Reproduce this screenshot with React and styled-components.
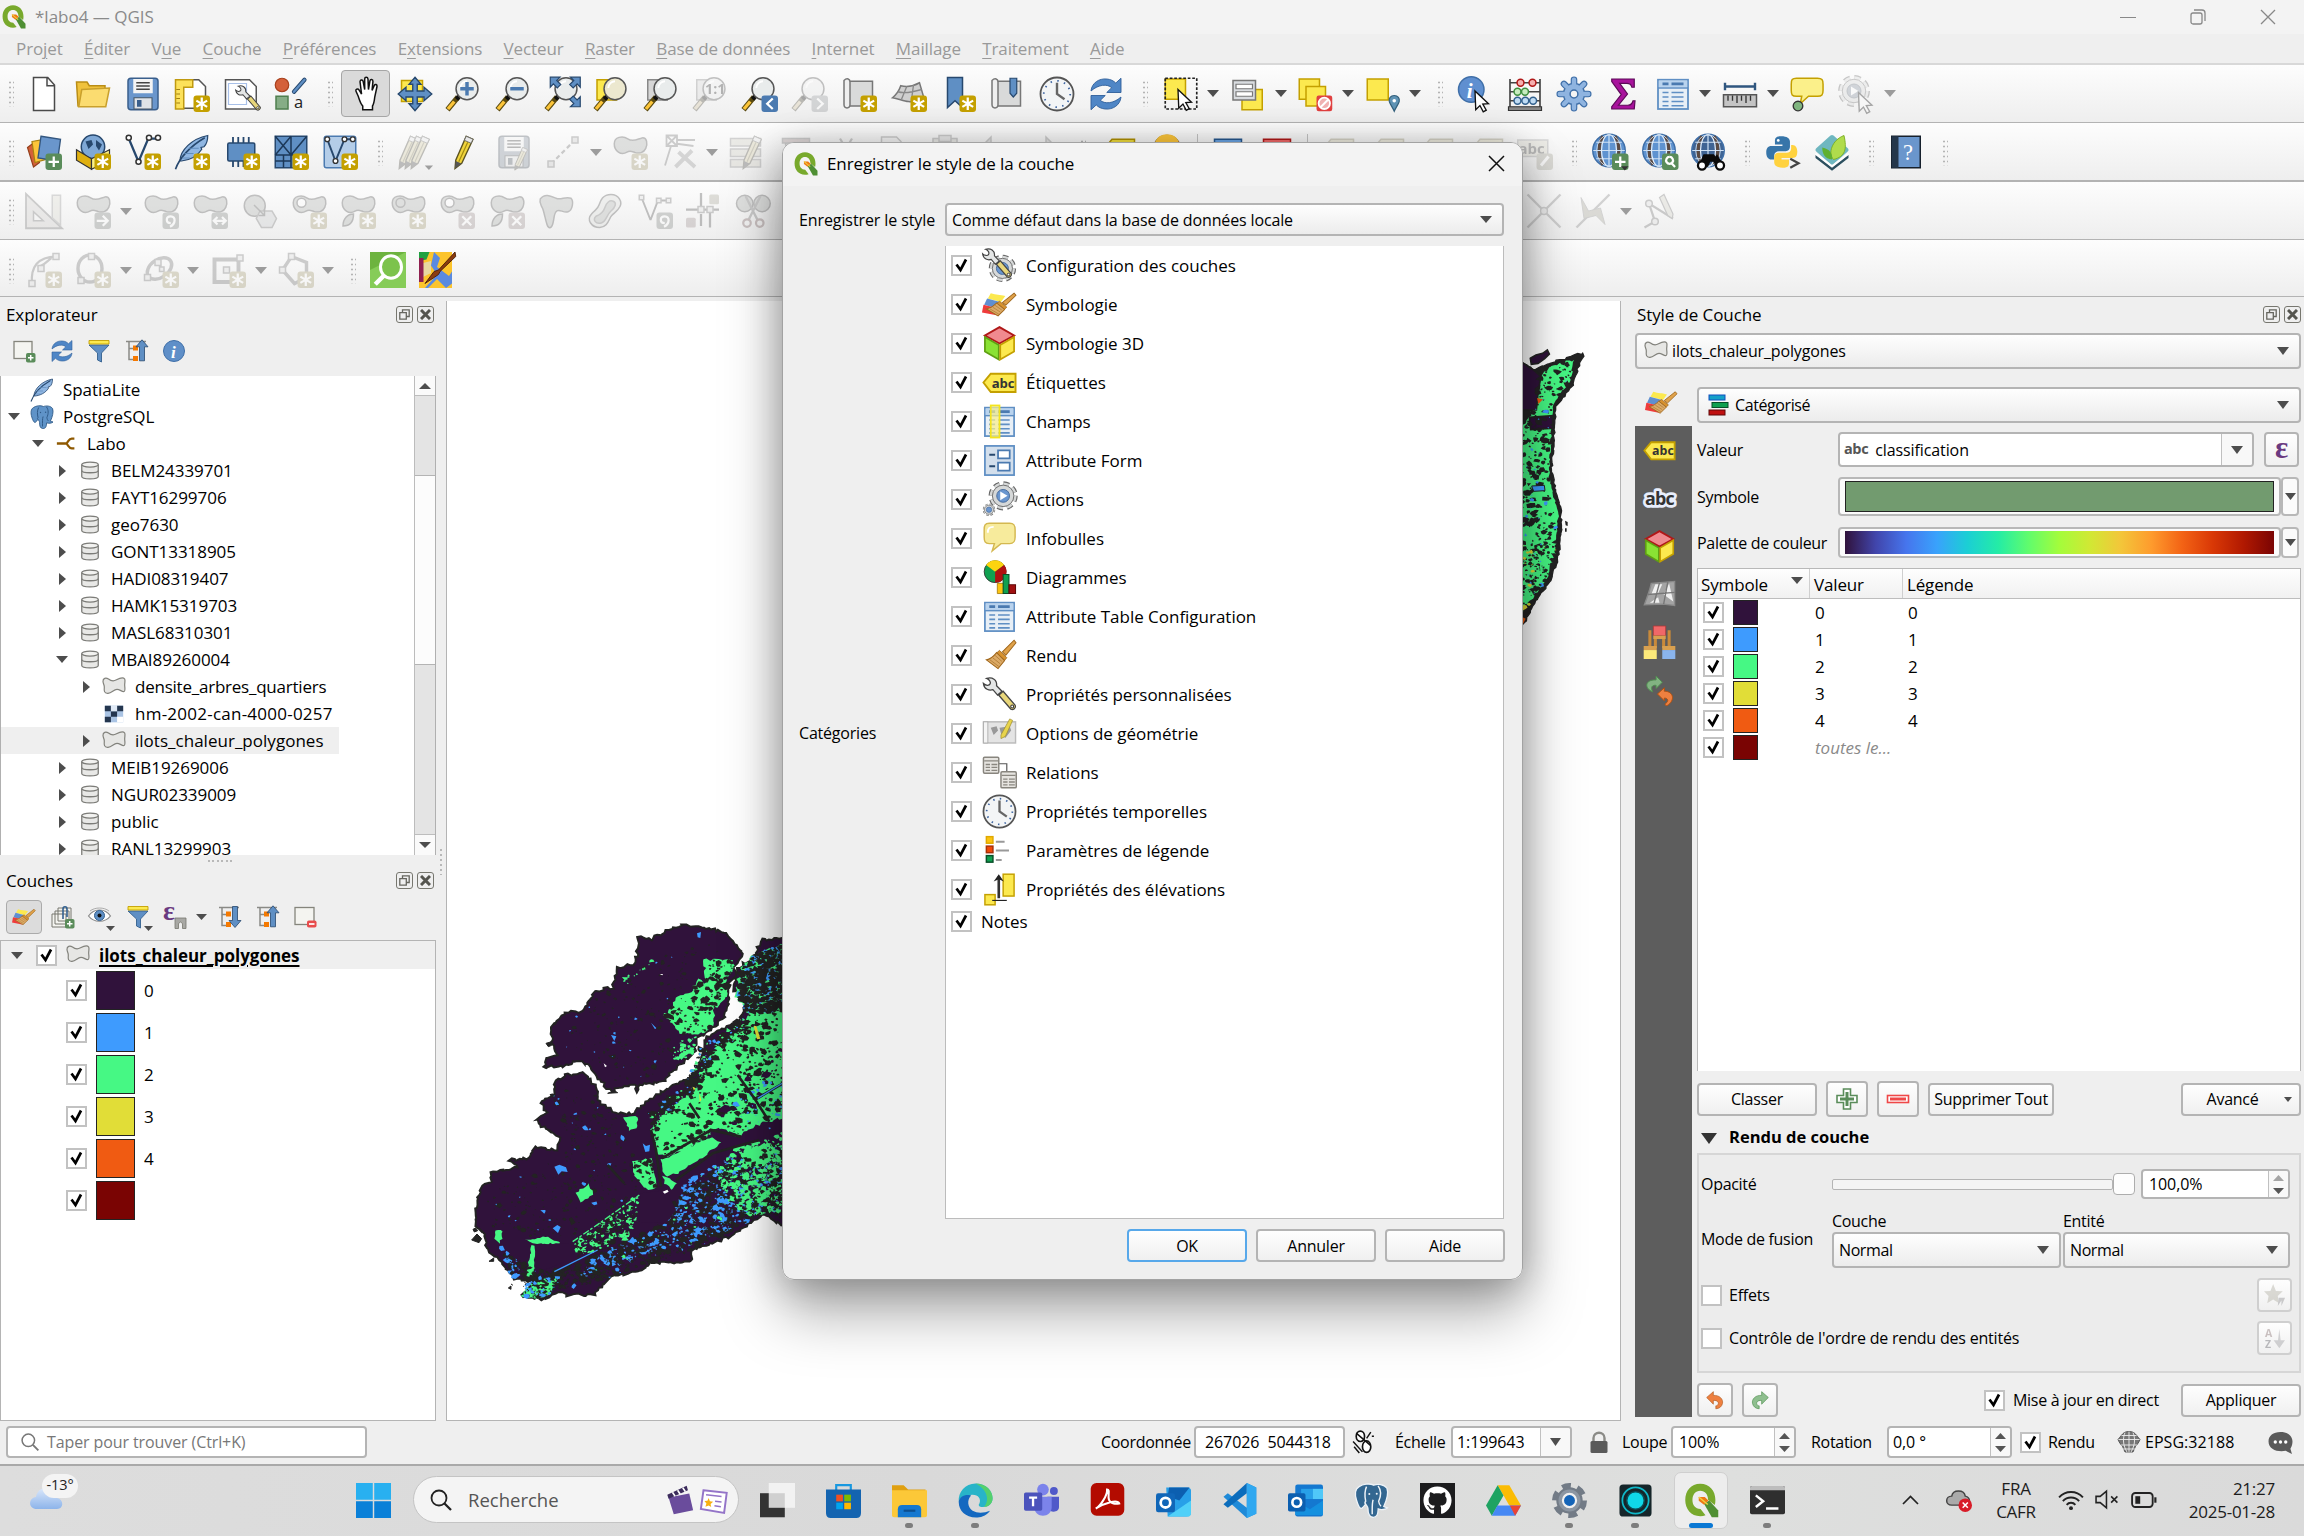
import React from "react";
import styled, { createGlobalStyle, css } from "styled-components";
import { FaGithub } from "react-icons/fa";

const Global = createGlobalStyle`
  * { box-sizing: border-box; }
  html, body { margin: 0; padding: 0; background: #efefef; }
  body { font-family: "Open Sans", "Noto Sans", sans-serif; font-size: 17px; letter-spacing: -0.1px; color: #000; overflow: hidden; }
`;

/* ---------- icons, drawn on a 24 unit grid ---------- */

const Svg = ({ s = 36, vb = "0 0 24 24", dim, children }) => (
  <IconSvg width={s} height={s} viewBox={vb} $dim={dim} fill="none">{children}</IconSvg>
);
const IconSvg = styled.svg`
  display: block;
  flex: none;
  overflow: visible;
  letter-spacing: 0;
  ${(p) => p.$dim && css`opacity: 0.34; filter: grayscale(0.75);`}
`;

const BADGES = {
  star: ["#c4a000", "M18.5 14.3v8.400M14.900 16.400l7.200 4.200M22.100 16.400l-7.200 4.200"],
  plus: ["#5a8c5a", "M18.500 15v7M15 18.500h7"],
  x: ["#c08a8a", "M15.500 15.500l6 6M21.500 15.500l-6 6"],
  right: ["#7a8a80", "M14.500 18.500h7M18.500 15.200l3.300 3.300-3.300 3.300"],
  both: ["#7a8a80", "M14.500 18.500h8M17 16l-2.500 2.500 2.500 2.500M20 16l2.500 2.500-2.500 2.500"],
  turn: ["#7a8a80", "M18 22.500c4-2 4-7 .5-7-3.500 0-3.500 4.500 0 4.500"],
  left: ["#4b7ab0", "M20.500 15l-3.700 3.500 3.700 3.500"],
  next: ["#8c9aa8", "M16.800 15l3.700 3.500-3.700 3.500"],
  zoom: ["#5a8c5a", "M18 15.300a2.300 2.300 0 1 0 .1 0M19.700 19.800l2 2.200"],
};
const Badge = ({ k }) => (
  <>
    <rect x="13" y="13" width="11" height="11" rx="2" fill={BADGES[k][0]} />
    <path d={BADGES[k][1]} stroke="#fff" strokeWidth="1.500" />
  </>
);
const BLOB = "M1.500 6.500C1.500 2 7 .8 10.500 3.200S17 3.300 20 2.600c3.500-.4 3.800 4 2.500 7s-4.500 3.600-7 2.800-3.500-1.500-5.500-.3C6 14.500 1.500 11.500 1.500 6.500z";
const Blob = () => <path d={BLOB} fill="#a9b5a9" stroke="#555" />;
const Lens = ({ fill = "#e9ecec" }) => (
  <>
    <path d="M1 22.500L8 14" stroke="#5a4a10" strokeWidth="3.600" />
    <path d="M1.300 22L5.500 17" stroke="#fcc53a" strokeWidth="2.200" />
    <path d="M7 15.500l2-2.200" stroke="#111" strokeWidth="3" />
    <circle cx="14" cy="8.500" r="7.300" fill={fill} stroke="#555" strokeWidth="1" />
    <path d="M9.500 8a4.500 5 0 0 1 4.500-4.500" stroke="#fff" strokeWidth="1.200" />
  </>
);
const Sheet = () => <path d="M4 2.500h12.500L21 7v14.500H4z" fill="#fff" stroke="#555" />;
const Broom = () => (
  <>
    <path d="M14 9.500L22 1.500l1.300 1.800-7 8.500z" fill="#e0a24a" stroke="#a0671c" strokeWidth=".7" />
    <path d="M12 8.500l5 5-1.500 1.800-5.500-5z" fill="#d8922e" stroke="#a0671c" strokeWidth=".6" />
    <path d="M10 10l5.500 5.500L11 21 3 15c3-.5 5-2.500 7-5z" fill="#dcaa66" stroke="#a0671c" strokeWidth=".7" />
    <path d="M5.500 15l6 4.500M7.500 13.700l5 4M9 12l4.600 4" stroke="#a8742e" strokeWidth=".5" />
  </>
);
const Wrench = () => (
  <>
    <path d="M1 4.500c1.500 1.500 4 1.600 4.600.2C6.200 3.400 5 1.700 3.200 1 7-.2 10.500 2 10 6l3.700 3.800-3 2.600L7.500 8.700C5 9.500 1.500 8.500 1 4.500z" fill="#e4e6e6" stroke="#444" strokeWidth=".9" />
    <path d="M11.500 12.500l3-2.700 8.300 9.700c.8 1.500-1.400 3.500-3 2.600z" fill="#e8d67a" stroke="#444" strokeWidth=".9" />
    <circle cx="20.700" cy="20.200" r="1" fill="#fff" stroke="#333" strokeWidth=".7" />
  </>
);
const Gear = ({ cx, cy, r, fill = "#d6d8d8", stroke = "#666", w = 0.9, inner = "#6a96cf" }) => (
  <>
    <circle cx={cx} cy={cy} r={r} fill="none" stroke={stroke} strokeWidth={r * 0.5} strokeDasharray={`${r * 0.46} ${r * 0.325}`} />
    <circle cx={cx} cy={cy} r={r} fill="none" stroke={fill} strokeWidth={r * 0.3} strokeDasharray={`${r * 0.46} ${r * 0.325}`} />
    <circle cx={cx} cy={cy} r={r * 0.92} fill={fill} stroke={stroke} strokeWidth={w * 0.7} />
    <circle cx={cx} cy={cy} r={r * 0.55} fill={inner} stroke="#466a9a" strokeWidth={w * 0.7} />
  </>
);
const TableArt = () => (
  <>
    <rect x="2" y="2.500" width="20" height="19.500" fill="#e8eff6" stroke="#5f8fc4" strokeWidth="1.200" />
    <rect x="2.500" y="3" width="19" height="4.500" fill="#b9d3ee" />
    <path d="M5 5.200h4M11 5.200h8" stroke="#4b7ab0" strokeWidth="1.800" />
    <path d="M2 8h20" stroke="#5f8fc4" />
    <path d="M5 11h4M11 11h8M5 14h4M11 14h8M5 17h4M11 17h8M5 19.800h4M11 19.800h8" stroke="#5f8fc4" strokeWidth="1.100" />
  </>
);
const Cylinder = () => (
  <>
    <path d="M3 5v13c0 3.500 18 3.500 18 0V5" fill="#e8e8e6" stroke="#7c7c78" strokeWidth="1.400" />
    <ellipse cx="12" cy="5" rx="9" ry="2.700" fill="#f2f2f0" stroke="#7c7c78" strokeWidth="1.400" />
    <path d="M3 11.500c0 3.200 18 3.200 18 0" stroke="#7c7c78" strokeWidth="1.400" />
  </>
);
const Refresh = () => (
  <>
    <path d="M2 10C2.500 4.500 7.500 1.500 12.500 2c2.500.2 4.600 1.200 6 2.700L22 1.500V11h-9.500l3.300-3.200C13 5.200 7 5.500 2 10z" fill="#4f86c6" stroke="#2f5f9a" strokeWidth=".6" />
    <path d="M22 14c-.5 5.500-5.500 8.500-10.500 8-2.500-.2-4.600-1.200-6-2.700L2 22.500V13h9.500l-3.300 3.200c2.800 2.600 8.800 2.300 13.800-2.200z" fill="#4f86c6" stroke="#2f5f9a" strokeWidth=".6" />
  </>
);
const Feather = () => (
  <>
    <path d="M4 18C4 11 12 3 22.500 1c0 4-1 6-2.500 7.500l-2 .5.500 1.200C15.500 15 10 17.500 5 18z" fill="#8fb6e2" stroke="#27486e" strokeWidth=".8" />
    <path d="M1 23.500C3.500 16 11 8 20.500 2.500" stroke="#27486e" strokeWidth="1.100" />
    <path d="M7 13h6M10 9.500h6.500M5.500 16h5" stroke="#5b88b8" strokeWidth=".6" />
  </>
);
const Globe = ({ c1 = "#5f93d0" }) => (
  <>
    <circle cx="12" cy="11" r="10.800" fill={c1} stroke="#3f6fa8" />
    <path d="M8 1.500C4.500 7 4.500 15 8 20.500M16 1.500c3.500 5.500 3.500 13.500 0 19" stroke="#5b4a42" strokeWidth="2.200" />
    <path d="M1.500 11h21M3.500 5.500h17M3.500 16.500h17M12 .5v21" stroke="#cfe1f4" strokeWidth=".8" />
    <ellipse cx="12" cy="11" rx="5" ry="10.500" stroke="#e5effa" strokeWidth=".8" />
    <ellipse cx="12" cy="11" rx="8.200" ry="10.500" stroke="#cfe1f4" strokeWidth=".6" />
  </>
);
const Pencil = ({ x = 0 }) => (
  <g transform={`translate(${x} 0)`}>
    <path d="M14 1.500l4.500 2L11 19.500l-4.500 3.500.5-5.500z" fill="#f0d43c" stroke="#5b5220" strokeWidth=".9" />
    <path d="M14 1.500l4.500 2-1.300 2.700-4.500-2z" fill="#e8e8e8" stroke="#666" strokeWidth=".6" />
    <path d="M7 18l3.800 1.700L6.500 23z" fill="#555" />
    <path d="M15 5.500L9 18.500" stroke="#a38b10" strokeWidth=".8" />
  </g>
);
const Cursor = ({ x = 11, y = 10 }) => (
  <path transform={`translate(${x} ${y})`} d="M0 0l9 8.500-3.800.3 2.300 4-2 1.100-2.200-4.200L.5 12.500z" fill="#fff" stroke="#111" strokeWidth=".9" />
);
const Square = ({ x, y, s = 13 }) => <rect x={x} y={y} width={s} height={s} fill="#fce94f" stroke="#c4a000" strokeWidth="1" />;
const Cube = () => (
  <>
    <path d="M12 .8L22 6.500 12 12 2 6.500z" fill="#f08a8f" stroke="#b01818" strokeWidth="1.300" />
    <path d="M2 7.500l9.500 5.500v10L2 17.500z" fill="#8ae234" stroke="#5fa012" strokeWidth="1.200" />
    <path d="M22 7.500L12.500 13v10l9.500-5.500z" fill="#fce94f" stroke="#c4a000" strokeWidth="1.200" />
  </>
);
const Clock = () => (
  <>
    <circle cx="12" cy="12" r="11" fill="#f3f5f6" stroke="#555" strokeWidth="1.200" />
    <circle cx="12" cy="12" r="8.800" stroke="#3a62a0" strokeWidth="1.200" strokeDasharray="1 3.600" />
    <path d="M12 4.500V12l5 3.500" stroke="#666" strokeWidth="1.600" />
  </>
);
const Scroll = () => (
  <>
    <path d="M5 3.500h16v16.500H5z" fill="#d9dada" stroke="#777" />
    <path d="M2 3c2-2 4-1 4 1v15c0 3-4 3-4 0z" fill="#efefef" stroke="#777" />
  </>
);
const SymbologyArt = () => (
  <g transform="translate(0 3) scale(1 .8)">
    <path d="M6 1.500c4 1.500 6 1 10 2.500L13 9 4 6z" fill="#fce94f" />
    <path d="M3.500 6l9 3-4 5-7-2.500z" fill="#5f8fd0" />
    <path d="M1 11.500l7 2 2 7-10-2.500z" fill="#ef3b3b" />
    <Broom />
  </g>
);
const TreeLines = () => (
  <>
    <path d="M1 2.500h20M4 2.500v18h6M4 9.500h6" stroke="#8a8a86" strokeWidth="1.500" />
    <rect x="8" y="6.500" width="5" height="5" fill="#f57900" />
    <rect x="8" y="17" width="5" height="5" fill="#f57900" />
  </>
);
const Elephant = ({ fill, line }) => (
  <>
    <path d="M3.500 2.500C.8 4 .5 8 1.800 12c.9 3 2.200 6.200 3.700 5.200 1-.8 1.900-2 2.500-2.700.5 1 1.600 1.500 1.600 3.200 0 3 .5 5.600 3.200 5.800 3 .2 3.600-2 3.800-5.700 1.900.8 5 .5 6.400-.8-.8-.4-1.900-.3-2.600-.9C22.300 12 23.800 7 22.600 3.600 20.500.5 16 .7 13.500 1.500 10.500 0 6 .8 3.500 2.500z" fill={fill} stroke={line} strokeWidth=".9" />
    <path d="M8.600 2.500C7 6 7.300 9 8 12.500c-.8 1-.6 1.500 0 2M16.500 2c2.300 3 2 7 .4 10.500.2 1.500.5 2.500 1.600 3.500M12.500 21.500c0-4.500-.2-7.500.6-10" stroke={line} strokeWidth="1" />
    <circle cx="10.500" cy="7.500" r=".7" fill={line} />
    <circle cx="15.600" cy="7.300" r=".7" fill={line} />
  </>
);

const ICONS = {
  qgis: () => (
    <>
      <path d="M11.500 1.200C5.300 1.200 1.500 6 1.500 12s3.800 10.800 10 10.800c1.300 0 2.500-.2 3.500-.6l-3.300-4.200C8 17.800 6.300 15.300 6.300 12c0-3.600 2-6.200 5.200-6.200s5.200 2.500 5.200 6l4.500 3.600c.3-1 .4-2.200.4-3.400 0-6-3.900-10.800-10.100-10.800z" fill="#78a92c" />
      <path d="M14 14.500l3.500-2.200L23.500 19v4.500h-4.300z" fill="#4f8f33" />
      <path d="M10.500 10h4l2.500 2.300-3 2.800-3.500-2.600z" fill="#ee7913" />
      <path d="M10.500 10l6 5" stroke="#f0d040" strokeWidth="1" />
    </>
  ),
  pg: () => <Elephant fill="#5f93c8" line="#2f5a88" />,
  newp: () => <path d="M5 1h9.500L19 6v17H5zM14 1v5.500h5" fill="#fff" stroke="#4a4a4a" strokeWidth="1" />,
  open: () => (
    <>
      <path d="M1 4h7l1.500 2.500H20V20H2z" fill="#f0c23c" stroke="#b98d16" />
      <path d="M4.500 9L23 8l-2.500 12.500H2.500z" fill="#fbdc70" stroke="#c9a02c" />
    </>
  ),
  save: () => (
    <>
      <rect x="2" y="1.500" width="20" height="21" rx="2" fill="#6a96cc" stroke="#3a5f8c" />
      <path d="M5.500 2h13v9.500h-13z" fill="#f4f4f4" />
      <path d="M7.500 4.500h9M7.500 6.700h9M7.500 8.900h9" stroke="#444" strokeWidth="1" />
      <path d="M6 14.500h12v7.500H6z" fill="#dfe3e8" stroke="#456" strokeWidth=".7" />
      <rect x="8" y="16" width="3" height="4.500" fill="#3a5f8c" />
    </>
  ),
  layout: () => (<><Sheet /><path d="M1 2.500h11.500v5H6.500v14.500H1z" fill="#fce15a" stroke="#c09a10" /><path d="M1.500 9h2.500M1.500 12h2.500M1.500 15h2.500M1.500 18h2.500" stroke="#a08010" strokeWidth=".8" /><Badge k="star" /></>),
  layoutMgr: () => (<><path d="M1 2.500h16L21.500 7v15H1z" fill="#fff" stroke="#555" /><path d="M3 5h12v14H3z" stroke="#a8c0e8" strokeWidth=".8" /><g transform="translate(7 6) scale(.75)"><Wrench /></g></>),
  styleMgr: () => (
    <>
      <circle cx="6" cy="6" r="4.500" fill="#d4603a" stroke="#a8401c" strokeWidth=".8" />
      <path d="M14 10.500L21 2.500" stroke="#27486e" strokeWidth="2.800" strokeLinecap="round" />
      <path d="M14 10.500L21 2.500" stroke="#5f8fc4" strokeWidth="1.600" strokeLinecap="round" />
      <rect x="2" y="13.500" width="8" height="8.500" fill="#86ad86" stroke="#4f7f4f" />
      <text x="14" y="21.500" fontSize="11" fill="#222" fontFamily="Open Sans">a</text>
    </>
  ),
  hand: () => (
    <path d="M7.500 13.500L6 10.200c-.6-1.300 1.200-2.200 2-.9l1.700 2.700-1-8c-.2-1.600 1.800-1.800 2.100-.3l1 5.300V2c0-1.500 2-1.500 2.200 0l.3 7 1-5.700c.3-1.400 2-1.200 2 .3l-.6 6 1.500-3.300c.6-1.200 2-.6 1.800.7L18.500 14c-.3 3-.6 4.500-1.500 6v2.500h-6.500V20c-1.500-1.500-2-3.500-3-6.500z" fill="#fff" stroke="#111" strokeWidth="1" />
  ),
  pan: () => (
    <>
      <Square x={3} y={3} s={14} />
      <path d="M12 .8l4 4.700h-2.500v4.500H18V7.500l5.200 4.500-5.200 4.500V14h-4.500v4.500H16L12 23.200 8 18.500h2.500V14H6v2.500L.8 12 6 7.500V10h4.500V5.500H8z" fill="#5f8fc4" stroke="#27486e" strokeWidth=".9" />
    </>
  ),
  zin: () => (<><Lens /><path d="M14 4v9M9.500 8.500h9" stroke="#4b7ab0" strokeWidth="2.300" /></>),
  zout: () => (<><Lens /><path d="M9.500 8.500h9" stroke="#4b7ab0" strokeWidth="2.300" /></>),
  zfull: () => (
    <>
      <Lens />
      <path d="M3.500.8h6.500L7.800 3l2.700 2.700-2.300 2.200-2.600-2.600-2.100 2.200zM23.500.8H17L19.200 3l-2.700 2.700 2.300 2.200 2.600-2.600 2.100 2.200zM23.500 20.500H17l2.200-2.200-2.700-2.700 2.300-2.200 2.600 2.600 2.100-2.200z" fill="#5f8fc4" stroke="#27486e" strokeWidth=".8" />
    </>
  ),
  zsel: () => (<><rect x="2" y="2.500" width="13" height="13.500" fill="#fce94f" stroke="#c4a000" /><Lens fill="#ece8cf" /></>),
  zlay: () => (<><rect x="2.500" y="2.500" width="13" height="13.500" fill="#d6d6d6" stroke="#888" /><Lens /></>),
  z11: () => (<><rect x="2.500" y="2.500" width="13" height="13.500" fill="#d6d6d6" stroke="#888" /><Lens /><text x="8" y="12" fontSize="9.500" fontWeight="700" fill="#333" fontFamily="Open Sans">1:1</text></>),
  zlast: () => (<><Lens /><Badge k="left" /></>),
  znext: () => (<><Lens /><Badge k="next" /></>),
  mapview: () => (<><Scroll /><Badge k="star" /></>),
  mesh3d: () => (<><path d="M6.500 6.500c4 1 9 0 12.500-2l3.500 12c-3 2.500-8 .5-11 .5S5 15 1 14.500C4 12 5.500 9.500 6.500 6.500z" fill="#cfcfcf" stroke="#777" /><path d="M4.500 10.500c5 1.500 11 0 16-1.500M10.500 7L7 15.500M15 6l-1.500 11" stroke="#888" strokeWidth=".9" /><Badge k="star" /></>),
  bookmark: () => (<><path d="M5 1h10v20l-5-4.500L5 21z" fill="#5f8fc4" stroke="#27486e" /><Badge k="star" /></>),
  bookmarks: () => (<><Scroll /><path d="M14 1.500h4.500v10L16.200 14 14 11.500z" fill="#5f8fc4" stroke="#27486e" strokeWidth=".8" /></>),
  clock: Clock,
  refresh: Refresh,
  select: () => (<><Square x={1.500} y={2} s={13.500} /><path d="M1.500 1.500h21v20.500h-21z" stroke="#222" strokeWidth="1.100" strokeDasharray="1.800 1.200" /><Cursor x={10} y={9} /></>),
  selval: () => (<><Square x={8} y={9} s={13.500} /><rect x="2" y="3" width="15" height="13" fill="#d9dce0" stroke="#777" /><path d="M4 5.500h11v3H4zM4 10.500h11v3H4z" fill="#fff" stroke="#777" strokeWidth=".8" /></>),
  desel: () => (<><Square x={1.500} y={2} s={13.500} /><Square x={6} y={7} s={13} /><rect x="13" y="13" width="10.500" height="10.500" rx="1.500" fill="#e04040" /><circle cx="18.200" cy="18.200" r="3.800" fill="#f0b0b0" stroke="#fff" strokeWidth="1.200" /><path d="M15.500 21l5.500-5.500" stroke="#fff" strokeWidth="1.300" /></>),
  selloc: () => (<><Square x={1.500} y={2} s={14} /><path d="M19.500 13c-2.500 0-3.800 2-3.300 4 .6 2 2.300 4 3.300 6.500 1-2.500 2.700-4.500 3.300-6.500.5-2-.8-4-3.300-4z" fill="#5f93b4" stroke="#33607c" strokeWidth=".8" /><circle cx="19.500" cy="16.500" r="1.200" fill="#fff" /></>),
  ident: () => (<><circle cx="9.500" cy="9" r="8.500" fill="#5f8fd0" stroke="#3f6fa8" /><text x="6.500" y="14.500" fontSize="14" fontStyle="italic" fontWeight="700" fill="#fff" fontFamily="Liberation Serif">i</text><Cursor x={12} y={10} /></>),
  abacus: () => (
    <>
      <path d="M2 2v20M22 2v20M2 4.500h20M2 10.500h20M2 16.500h20" stroke="#444" strokeWidth="1.100" />
      <path d="M1 20.500h22v2.500H1z" fill="#888" stroke="#333" strokeWidth=".8" />
      <g strokeWidth="1">
        <g fill="#f6b0b0" stroke="#b01818"><circle cx="9" cy="4.500" r="2.300" /><circle cx="17" cy="4.500" r="2.300" /></g>
        <g fill="#c8ecc0" stroke="#3f8f3f"><circle cx="7" cy="10.500" r="2.300" /><circle cx="12" cy="10.500" r="2.300" /></g>
        <g fill="#c0dcf4" stroke="#33628f"><circle cx="7" cy="16.500" r="2.300" /><circle cx="12.200" cy="16.500" r="2.300" /><circle cx="17.400" cy="16.500" r="2.300" /></g>
      </g>
    </>
  ),
  gear: () => (
    <>
      <circle cx="12" cy="12" r="7" fill="#8fb4e0" stroke="#3f6fa8" />
      <g stroke="#3f6fa8" strokeWidth="4.400" strokeLinecap="round"><path d="M12 2.500v19M2.500 12h19M5.300 5.300l13.400 13.400M18.700 5.300L5.300 18.700" /></g>
      <g stroke="#8fb4e0" strokeWidth="2.900" strokeLinecap="round"><path d="M12 2.500v19M2.500 12h19M5.300 5.300l13.400 13.400M18.700 5.300L5.300 18.700" /></g>
      <circle cx="12" cy="12" r="6.600" fill="#8fb4e0" />
      <circle cx="12" cy="12" r="2.600" fill="#f4f4f4" stroke="#3f6fa8" />
    </>
  ),
  sigma: () => <path d="M4.500 2h15v5.500h-1.600c-.4-2-1.200-2.600-3.300-2.600H9.800L15 12l-6 7.500h6.200c2.300 0 3-1 3.500-3H20l-.5 5.500h-15v-1.600l6.300-8L4.500 3.700z" fill="#a8129c" stroke="#5c0a58" strokeWidth=".8" />,
  table: TableArt,
  ruler: () => (<><path d="M2 7h20M2 4.500v5M22 4.500v5" stroke="#2f567f" strokeWidth="1.600" /><rect x="1" y="12.500" width="22" height="8" fill="#c4c4c4" stroke="#555" /><path d="M4 13v3.500M7 13v3.500M10 13v5M13 13v3.500M16 13v5M19 13v3.500" stroke="#333" strokeWidth=".9" /></>),
  maptip: () => (<><path d="M5 1.500h14c3 0 3.700 1 3.700 4v4c0 3-.7 4-3.700 4h-6L7.500 18.500l1-5H5c-3 0-3.500-1-3.500-4v-4c0-3 .5-4 3.500-4z" fill="#fbf08a" stroke="#c4a000" /><circle cx="6" cy="20" r="3.200" fill="#7fb57f" stroke="#333" strokeWidth=".9" /></>),
  action: () => (<><Gear cx={10} cy={10} r={8.500} /><path d="M8 7l5 3-5 3z" fill="#fff" /><Cursor x={13} y={11} /></>),
  dsm: () => (<><path d="M1 9l4-3 4 13-4 3z" fill="#d4603a" stroke="#93401c" strokeWidth=".8" /><path d="M4 5l6-1 3 13-7 2z" fill="#fcc53a" stroke="#a88010" strokeWidth=".8" /><path d="M10 1.500l13 2-2 14.500-13-2z" fill="#6a96cc" stroke="#33567f" strokeWidth=".9" /><Badge k="plus" /></>),
  geopkg: () => (<><circle cx="12" cy="8.500" r="7.800" fill="#7fa8d6" stroke="#27486e" /><path d="M7 5l4-1 1 3-3 3zM14 4l4 3-2 4-2-3z" fill="#27486e" /><path d="M1 10.500l10 6v7L1 17.500z" fill="#e0b010" stroke="#333" strokeWidth=".8" /><path d="M23 10.500L11 16.500v7L23 17.500z" fill="#fbf08a" stroke="#333" strokeWidth=".8" /><Badge k="star" /></>),
  shp: () => (<><path d="M2.500 3L9 18.500 15.500 3H22" stroke="#27486e" strokeWidth="1.500" /><g fill="#fff" stroke="#333"><circle cx="2.500" cy="2.500" r="1.700" /><circle cx="9" cy="18.500" r="1.700" /><circle cx="16" cy="2.500" r="1.700" /><circle cx="22" cy="2.500" r="1.700" /></g><Badge k="star" /></>),
  spatialite: () => (<><Feather /><Badge k="star" /></>),
  chip: () => (<><path d="M6 2v20M9.500 2v20M13 2v20M16.500 2v20" stroke="#27486e" strokeWidth="1.200" /><rect x="2.500" y="6" width="18" height="12" rx="1" fill="#5f8fc4" stroke="#27486e" /><Badge k="star" /></>),
  meshnew: () => (<><rect x="1.500" y="1.500" width="21" height="21" fill="#5f8fc4" stroke="#27486e" /><path d="M1.500 14h21M12 14v8.500M7 14v8.500M1.500 18h11M12 1.500V14M1.500 1.500L12 14M12 1.500L1.500 14M12 14L22.500 1.500" stroke="#1c3858" strokeWidth="1" /><Badge k="star" /></>),
  virt: () => (<><rect x="1.500" y="1.500" width="21" height="21" rx="1.500" fill="#b4cde8" stroke="#4b7ab0" /><path d="M3.500 3.500L9 18 15 3.500h5.500" stroke="#27486e" strokeWidth="1.300" /><g fill="#fff" stroke="#333" strokeWidth=".9"><circle cx="3.500" cy="3.500" r="1.600" /><circle cx="9" cy="18" r="1.600" /><circle cx="15" cy="3.500" r="1.600" /><circle cx="20.500" cy="3.500" r="1.600" /></g><Badge k="star" /></>),
  pencils: () => (<><Pencil x={-5} /><Pencil x={-1} /><Pencil x={3} /><path d="M18.500 21h5.500l-2.700 3z" fill="#000" /></>),
  pencil: () => <Pencil x={-0.5} />,
  saveedit: () => (<>{ICONS.save()}<g transform="translate(8 8) scale(.7)"><Pencil /></g></>),
  line: () => (<><path d="M4 20L20 4" stroke="#777" strokeWidth="1.500" strokeDasharray="3 2" /><path d="M2 18h4v4H2zM18 2h4v4h-4z" fill="#ccc" stroke="#777" /></>),
  polyadd: () => (<><Blob /><Badge k="star" /></>),
  vertex: () => (<><path d="M3 1h7v7H3zM3 1l7 7M10 1L3 8M6 8L2 21M10 4h12M10 6.500l11 1.500" stroke="#777" strokeWidth="1.200" /><path d="M11 12l11 10M20 11L9 22" stroke="#999" strokeWidth="2.600" /></>),
  modattr: () => (<><path d="M1 3h20v5H1zM1 10h20v5H1zM1 17h20v5H1z" fill="#d8d2a8" stroke="#888" /><Pencil x={3} /></>),
  del: () => (<><path d="M5 6h14l-1.500 16h-11z" fill="#ccc" stroke="#777" /><path d="M3 3h18v3H3z" fill="#d88" stroke="#777" /></>),
  cut: () => (<><path d="M8 3l7 12M16 3L9 15" stroke="#777" strokeWidth="1.500" /><circle cx="7" cy="18" r="3" stroke="#b55" strokeWidth="1.500" /><circle cx="17" cy="18" r="3" stroke="#b55" strokeWidth="1.500" /></>),
  copy: () => (<><path d="M3 2h10l3 3v12H3z" fill="#eee" stroke="#777" /><path d="M8 7h10l3 3v12H8z" fill="#eee" stroke="#777" /></>),
  paste: () => (<><path d="M4 3h16v19H4z" fill="#d8d2a8" stroke="#777" /><path d="M8 1h8v4H8z" fill="#ccc" stroke="#777" /></>),
  undoD: () => <path d="M3 9l7-7v4c8 0 11 6 9 14-1-5-3-8-9-8v4z" fill="#bbb" stroke="#777" />,
  redoD: () => <path d="M21 9l-7-7v4C6 6 3 12 5 20c1-5 3-8 9-8v4z" fill="#bbb" stroke="#777" />,
  tag: () => <path d="M8 3.500h15v17H8L1 12z" fill="#f0dc3c" stroke="#b09000" />,
  pie: () => (<><circle cx="12" cy="10" r="9" fill="#10a050" stroke="#333" /><path d="M12 10L4 5a9 9 0 0 1 16 0z" fill="#fcc53a" /><path d="M12 10l8-5a9 9 0 0 1-8 14z" fill="#b01818" /></>),
  tagBlue: () => <rect x="3" y="3.500" width="18" height="14" fill="#6aa4e4" stroke="#27588f" />,
  tagRed: () => <rect x="3" y="3.500" width="18" height="14" fill="#f06868" stroke="#b01818" />,
  abcedit: () => (<><rect x=".5" y="4" width="20" height="11" fill="#e0d9a0" stroke="#999" /><text x="1" y="13" fontSize="10" fontWeight="700" fill="#444" fontFamily="Open Sans">abc</text><rect x="13" y="13" width="11" height="11" rx="2" fill="#b0a870" /><path d="M16 21l5-6" stroke="#fff" strokeWidth="2" /></>),
  gplus: () => (<><Globe /><g transform="translate(1 0)"><Badge k="plus" /><path d="M19 21.500h5l-2.500 2.800z" fill="#333" /></g></>),
  gzoom: () => (<><Globe /><g transform="translate(1 0)"><Badge k="zoom" /></g></>),
  gbin: () => (<><Globe c1="#3f6494" /><path d="M9 13.500h7l1 1.500 1-1.500 4 6.500-5 1-1.500-2.500h-2L12 22l-6-1.500z" fill="#0a0a0a" /><circle cx="8" cy="21" r="2.700" fill="#fff" stroke="#0a0a0a" strokeWidth="1.500" /><circle cx="20" cy="21" r="2.700" fill="#fff" stroke="#0a0a0a" strokeWidth="1.500" /></>),
  python: () => (
    <>
      <path d="M11.500 1.500C7.500 1.500 7.300 3.200 7.300 5v2h5v1H5C2.500 8 1.500 9.800 1.500 12.300S2.600 17 5 17h1.800v-2.500c0-2 1.400-3 3.200-3h4.500c1.600 0 2.800-1.300 2.800-2.800V5c0-2-2-3.500-5.800-3.500z" fill="#3775a9" />
      <circle cx="9.500" cy="4.300" r=".9" fill="#fff" />
      <path d="M12.500 22.500c4 0 4.200-1.700 4.200-3.500v-2h-5v-1H19c2.500 0 3.200-1.800 3.200-4.300S21 7.300 19 7.300h-.9V9.500c0 2-1.400 3-3.200 3H9.600c-1.600 0-2.800 1.300-2.800 2.800V19c0 2 2 3.500 5.700 3.500z" fill="#ffd23f" />
      <path d="M17.500 16.500l5.500 3-5.500 3" stroke="#444" strokeWidth="1.500" />
    </>
  ),
  leaf: () => (<><path d="M1 14l11 8.500L23 14v2L12 24.500 1 16z" fill="#2c4f5f" /><path d="M11 1c.6-.5 1.400-.5 2 0l9.500 8.500c.7.700.7 1.500 0 2.200L13 20c-.6.600-1.400.6-2 0L1.500 11.700c-.7-.7-.7-1.500 0-2.200z" fill="#6fb7c0" /><path d="M1 13l11 8.500L23 13" stroke="#fff" strokeWidth="1.100" /><path d="M20 1c2 9 1 14-7 16C9 13 12 4 20 1z" fill="#b0dc4c" stroke="#79ad20" strokeWidth=".6" /><path d="M5.500 9c5 1 7 4 6.500 8-5-.5-6.500-4-6.500-8z" fill="#5fb030" /></>),
  help: () => (<><path d="M2.500 1.500h19v21h-19z" fill="#6a96cc" stroke="#16202c" /><path d="M2.500 1.500H7v21H2.500z" fill="#24364a" /><text x="10" y="17.500" fontSize="15" fill="#fff" fontFamily="Liberation Serif">?</text></>),
  setsq: () => (<><path d="M0 .5v23h24z" fill="#d8cfc8" stroke="#777" strokeWidth="1.200" /><path d="M5 12.500v6h6.500z" fill="#f4f4f4" stroke="#777" /><path d="M17.500 1.500H23v20l-5.500-5z" fill="#e0dcb8" stroke="#999" /></>),
  pMove: () => (<><Blob /><Badge k="right" /></>),
  pRot: () => (<><Blob /><Badge k="turn" /></>),
  pScale: () => (<><Blob /><Badge k="both" /></>),
  simp: () => (<><circle cx="8.500" cy="8.500" r="7" fill="#a9b5a9" stroke="#555" /><path d="M12 12h8l3 5-3 6h-7l-3.500-6z" fill="#c4ccd4" stroke="#777" /><path d="M8 8l7 7M15 11v4h-4" stroke="#555" /></>),
  ring: () => (<><Blob /><circle cx="7" cy="6.500" r="3" fill="#fff" stroke="#555" /><Badge k="star" /></>),
  part: () => (<><Blob /><path d="M2 22c0-5 3-8 7-8 0 5-2 8-7 8z" fill="#a9b5a9" stroke="#555" /><Badge k="star" /></>),
  fring: () => (<><Blob /><circle cx="7" cy="6.500" r="3" fill="#a9b5a9" stroke="#555" /><Badge k="star" /></>),
  dring: () => (<><Blob /><circle cx="7" cy="6.500" r="3" fill="#fff" stroke="#555" /><Badge k="x" /></>),
  dpart: () => (<><Blob /><path d="M2 22c0-5 3-8 7-8 0 5-2 8-7 8z" fill="#a9b5a9" stroke="#555" /><Badge k="x" /></>),
  reshape: () => <path d="M1.500 4c3-4 7-2 10.500-.5s6-1.500 10 0c2 2 1 8-2 9s-5.500-2-7.500-.5-1.500 4-2.500 8-3 4-4 1-1.500-6-2.500-9.500-3-4-2-7.500z" fill="#a9b5a9" stroke="#555" />,
  offset: () => (<><path d="M3 14c2.500-3 4-3 5-6s2.500-7 8-7 7.500 5 6 8-3.500 4-5.500 6-2.500 8-8 8-9-5-5.500-9z" fill="#d8dcd0" stroke="#555" /><path d="M6 15.500c3-1 5-3 6-6s3-5 5.500-4 1.500 4-1.500 6.500-3 7-6.500 8-6-2-3.500-4.500z" fill="#a9b5a9" stroke="#777" /></>),
  splitf: () => (<><path d="M3 3l6 15M9 18L14 5h7" stroke="#555" strokeWidth="1.300" /><path d="M1.500 1.500h3v3h-3zM13 3.500h3v3h-3zM19.500 3.500h3v3h-3z" fill="#ddd" stroke="#777" /><Badge k="turn" /></>),
  splitp: () => (<><path d="M10 0v9M0 11h22M10 14v8M16 11v12" stroke="#555" strokeWidth="1.500" /><rect x="15.500" y="1" width="6.500" height="6.500" rx="1" fill="#b0a870" /><rect x="0" y="16.500" width="6.500" height="6.500" rx="1" fill="#c08a8a" /><path d="M8 9h4v4H8zM14 9h4v4h-4z" fill="#ddd" stroke="#777" /></>),
  scis: () => (<><ellipse cx="6.500" cy="7" rx="5.500" ry="5.500" fill="#a9b5a9" stroke="#555" /><ellipse cx="18" cy="7" rx="5.500" ry="5.500" fill="#a9b5a9" stroke="#555" /><path d="M7 2l8 16M17 2L9 18" stroke="#777" strokeWidth="1.600" /><circle cx="8" cy="20" r="2.500" stroke="#b55" strokeWidth="1.500" /><circle cx="16.500" cy="20" r="2.500" stroke="#b55" strokeWidth="1.500" /></>),
  crossX: () => (<><path d="M1 1l22 22M23 1L1 23" stroke="#888" strokeWidth="1.600" /><circle cx="12" cy="12" r="2.300" fill="#ddd" stroke="#888" /></>),
  bolt: () => (<><path d="M1 23L23 1" stroke="#888" strokeWidth="1.600" /><path d="M4 3l5 9 8-2 3 11-6-6-8 2z" fill="#b0a870" stroke="#888" strokeWidth=".6" /></>),
  trace: () => (<><path d="M1 23l7-4L4 7l16 10" stroke="#777" strokeWidth="1.500" /><circle cx="4" cy="7" r="2.200" fill="#ddd" stroke="#777" /><circle cx="8" cy="19" r="2.200" fill="#ddd" stroke="#777" /><path d="M11 3l3-2 6 13-.5 3-3-2z" fill="#d8d2a8" stroke="#777" strokeWidth=".8" /></>),
  arc: () => (<><path d="M4 21C3 10 8 3 20 3M8 10c4-1 6-4 9-6" stroke="#777" strokeWidth="1.500" /><path d="M2 19h4v4H2zM18 1h4v4h-4zM8 9h4v4H8z" fill="#ddd" stroke="#777" /><Badge k="star" /></>),
  circ: () => (<><ellipse cx="10" cy="11" rx="8" ry="9" stroke="#777" strokeWidth="2.300" /><path d="M9 1h4v4H9zM2 17h4v4H2z" fill="#ddd" stroke="#777" /><Badge k="star" /></>),
  elli: () => (<><ellipse cx="11" cy="11" rx="9" ry="6" transform="rotate(-35 11 11)" stroke="#777" strokeWidth="2.300" /><path d="M8 5h4v4H8zM1 15h4v4H1zM11 10h3v3h-3z" fill="#ddd" stroke="#777" /><Badge k="star" /></>),
  recta: () => (<><path d="M3 5h16v15H3z" stroke="#777" strokeWidth="2.600" /><path d="M18 2h4v4h-4zM9 10h4v4H9z" fill="#ddd" stroke="#777" /><Badge k="star" /></>),
  penta: () => (<><path d="M9 3l10 4v10l-8 4-8-9z" stroke="#777" strokeWidth="2.300" /><path d="M7 1h4v4H7zM1 10h4v4H1z" fill="#ddd" stroke="#777" /><Badge k="star" /></>),
  greenSearch: () => (<><rect x="0" y="0" width="24" height="24" fill="#6db33f" /><path d="M0 12L24 0v24H0z" fill="#86cc58" /><ellipse cx="14" cy="10" rx="7" ry="7.500" stroke="#fff" strokeWidth="2" fill="#7cc34c" /><path d="M9.500 15.500L3.500 21.500" stroke="#fff" strokeWidth="3" /></>),
  mapPaint: () => (<><rect width="22" height="24" fill="#fcc42c" /><path d="M0 0h7l-2 5-5 1z" fill="#20a040" /><path d="M0 8l8-2v8l-8 4z" fill="#e8d8a0" /><path d="M0 4h3v16H0z" fill="#8f2050" /><path d="M10 0l4 4-2 6 8 6 2-3v8l-4 3-6-6-6 6H4l8-9-4-6z" fill="#5a8ae0" /><path d="M24 0l-11 12-3 1-6 8 9-6 1-2L24.500 3z" fill="#8a3c10" stroke="#4a1c06" strokeWidth=".6" /></>),
  winAdd: () => (<><rect x="2" y="2.500" width="18" height="17" fill="#f4f4f0" stroke="#85857c" strokeWidth="1.300" /><rect x="14" y="14" width="9.500" height="9.500" rx="1.800" fill="#5a8c5a" /><path d="M18.700 16v5.500M16 18.700h5.500" stroke="#fff" strokeWidth="1.500" /></>),
  winDel: () => (<><rect x="2" y="2.500" width="19" height="17" fill="#f4f4f0" stroke="#85857c" strokeWidth="1.300" /><rect x="14" y="15.500" width="9.500" height="7" rx="1.800" fill="#e84c4c" /><path d="M16 19h5.500" stroke="#fff" strokeWidth="1.700" /></>),
  filter: () => (<><path d="M2 6h20l-7.500 8v9l-4-2v-7z" fill="#5f8fc4" stroke="#33608f" strokeWidth=".9" /><path d="M2 1.500h20v3.500H2z" fill="#fce94f" stroke="#c4a000" strokeWidth=".9" /></>),
  collapse: () => (<><TreeLines /><path d="M17 .8l6 7h-3.500v14h-5v-14H11z" fill="#5f8fc4" stroke="#27486e" strokeWidth=".8" /></>),
  expand: () => (<><TreeLines /><path d="M17 22.500l6-7h-3.500V1.500h-5v14H11z" fill="#5f8fc4" stroke="#27486e" strokeWidth=".8" /></>),
  info: () => (<><circle cx="12" cy="12" r="10.500" fill="#5f8fc8" stroke="#3f6fa8" /><text x="9" y="18.500" fontSize="17" fontStyle="italic" fontWeight="700" fill="#fff" fontFamily="Liberation Serif">i</text></>),
  feather: Feather,
  conn: () => <path d="M1 12h11M21 6.500h-3c-3 0-3.500 2.500-6 5.500 2.500 3 3 5.500 6 5.500h3" stroke="#8f5902" strokeWidth="2.600" />,
  db: Cylinder,
  poly: () => <path d="M1 6.500C.8 3 4 2.500 6.500 4c2.500 2 5 2.500 8 .8C18 3 21.500 2.500 22.700 4c.8 2-.2 4 0 6.500.2 3 .8 5.500-.7 6-2 .6-4-2.200-7-2.200-3.500 0-5 3.700-9 4-4 .3-4-2.800-3.700-6 .2-2-1.200-3.600-1.300-5.800z" fill="#e6e6e4" stroke="#82827c" strokeWidth="1.200" />,
  raster: () => (<><path d="M1 2h22v20H1z" fill="#aac4e4" /><path d="M1 2h7.300v6.700H1zM15.700 2H23v6.700h-7.300zM8.300 8.700h7.400v6.600H8.300zM1 15.300h7.300V22H1z" fill="#24364f" /><path d="M8.300 2h7.400v6.700H8.300z" fill="#dfe9f5" /><path d="M15.700 15.300H23V22h-7.300z" fill="#fff" /></>),
  symbology: SymbologyArt,
  groupAdd: () => (<><path d="M1 9h14v13H1zM4 6h14v13H4zM7 3h13v13H7z" fill="#f4f4f0" stroke="#77776f" strokeWidth="1" /><path d="M12 14V4c0-3 4-3 4 0v8" stroke="#33608f" strokeWidth="1.600" /><rect x="14" y="14" width="9.500" height="9.500" rx="1.800" fill="#5a8c5a" /><path d="M18.700 16v5.500M16 18.700h5.500" stroke="#fff" strokeWidth="1.500" /></>),
  eye: () => (<><path d="M.5 11C6 3 17 3 22.500 11 17 18 6 18 .5 11z" fill="#fff" stroke="#888" strokeWidth="1.200" /><circle cx="11.500" cy="10.500" r="5" fill="#5f8fc4" stroke="#33608f" /><circle cx="11.500" cy="10.500" r="2" fill="#111" /><path d="M2 6C7 2 16 2 21 6" stroke="#999" strokeWidth=".8" /></>),
  eps: () => (<><text x="0" y="15" fontSize="28" fontWeight="700" fill="#6a3a80" fontFamily="Liberation Serif">ε</text><path d="M12 13h11v10.500h-3.500v-5l-2-1.500-2 1.500v5H12z" fill="#a8a8a4" stroke="#77776f" strokeWidth=".8" /></>),
  mask: () => (<text x="12" y="16.500" textAnchor="middle" fontSize="13" fontWeight="700" fontFamily="Open Sans" fill="#333" stroke="#e8eefc" strokeWidth="4" strokeLinejoin="round" paintOrder="stroke" letterSpacing="-.5">abc</text>),
  label: () => (<><path d="M6 6h17v12.500H6L1 12z" fill="#fce94f" stroke="#c4a000" strokeWidth="1.300" /><text x="14.500" y="15.500" textAnchor="middle" fontSize="9" fontWeight="700" fill="#333" fontFamily="Open Sans">abc</text></>),
  mesh: () => (<><path d="M6 4l17-1.500V20l-8-1-14 .5C3 14 5 9 6 4z" fill="#a4a4a4" stroke="#8a8a8a" /><path d="M9 4.500h5l-3 6.500-5 1zM15 12l4-8 3 13zM5 18l6-4 1 4z" fill="#f0f0f0" /><path d="M12 3.500l-4 15M18 3l-3 16M3.500 12L23 10.500" stroke="#777" /></>),
  cube: Cube,
  brushes: () => (<><path d="M9 6v10M15 6v10M5 3v15M19 3v15" stroke="#c98a3a" strokeWidth="2.200" /><path d="M7.500 0h9v7h-9z" fill="#f06868" stroke="#b03838" strokeWidth=".6" /><path d="M7.500 7h9v2.500h-9z" fill="#d8a050" /><path d="M.5 14.500h9.500v3H.5zM14 14.500h9.500v3H14z" fill="#d8a050" /><path d="M.5 17.500h9.500V24H.5z" fill="#fce97a" /><path d="M14 17.500h9.500V24H14z" fill="#8ab4ec" /></>),
  history: () => (<><path d="M9.500 1.500l4.500 4.500-4.500 4.500V8.200C6.500 8 5.500 9.500 7 13 1 10.500 1 4 9.500 4.300z" fill="#82b382" stroke="#4f8f4f" strokeWidth=".7" /><path d="M10.500 14.500l5-4.500v2.500c7 0 8 7 2 10.500-1.500 0-2-1.500-.5-2 1.500-1 1.500-3.500-1.500-3.500v2z" fill="#ee8040" stroke="#b05010" strokeWidth=".7" /></>),
  categ: () => (<><rect x="2" y="2" width="16" height="5" fill="#14a0c8" stroke="#104fbf" /><rect x="5" y="9.500" width="16" height="5" fill="#10a050" stroke="#084f28" /><rect x="2" y="17" width="16" height="5" fill="#c01010" stroke="#5f0808" /></>),
  layerConf: () => (<><Gear cx={14} cy={14} r={7.500} /><g transform="scale(.9) translate(-.5 0)"><Wrench /></g></>),
  fields: () => (<><TableArt /><rect x="6" y="1" width="6" height="22" fill="#fbf08a" fillOpacity=".7" stroke="#f4e41c" strokeWidth="1.200" /></>),
  form: () => (<><rect x="2" y="2" width="20" height="20" fill="#d3dfec" stroke="#5f8fc4" strokeWidth="1.200" /><path d="M5 8h4M5 16h4" stroke="#27486e" strokeWidth="1.400" /><path d="M11 5h8v5.500h-8zM11 13.500h8V19h-8z" fill="#fff" stroke="#4b7ab0" strokeWidth="1.200" /></>),
  actions: () => (<><Gear cx={14.500} cy={9.500} r={8} /><path d="M12.500 6.500l5 3-5 3z" fill="#fff" /><Gear cx={4.800} cy={19} r={3.400} w={0.6} /></>),
  tips: () => (<><path d="M5 1.500h14c3 0 3.700 1.500 3.700 4.500v5c0 3-.7 4.500-3.700 4.500h-6L7 20.500l1.500-5H5C2 15.500 1.500 14 1.500 11V6C1.500 3 2 1.500 5 1.500z" fill="#f7eb9c" stroke="#d4b850" /><path d="M4 8c0-3 1-4 4-4" stroke="#fff" strokeWidth="1.300" /></>),
  diag: () => (<><circle cx="9" cy="8" r="7.500" fill="#10a050" stroke="#333" strokeWidth=".6" /><path d="M9 8L2.800 3.500a7.500 7.500 0 0 1 12.400 0z" fill="#fcd410" /><path d="M9 8l6.200-4.500A7.500 7.500 0 0 1 9 15.500z" fill="#b01010" /><path d="M10.500 16H15v7h-4.500z" fill="#fcc410" stroke="#a88010" strokeWidth=".6" /><path d="M14.500 10h4v13h-4z" fill="#10a050" stroke="#084f28" strokeWidth=".7" /><path d="M18.500 17h4.500v6h-4.500z" fill="#a01010" stroke="#5f0808" strokeWidth=".7" /></>),
  broom: Broom,
  wrench: Wrench,
  geom: () => (<><rect x="1" y="4" width="22" height="14.500" fill="#e4e4e4" stroke="#bbb" /><path d="M1 4h3v14.500H1z" fill="#f4f4f4" stroke="#aaa" strokeWidth=".6" /><path d="M6 8l4-1 1 3-3 3zM12 8l7-1 1 3-4 5-3-3z" fill="#999" /><path d="M13 13L19 2l2 1-5 11-3 1.500z" fill="#e8d44c" stroke="#a09030" strokeWidth=".5" /></>),
  relat: () => (<><path d="M11 6h6v6" stroke="#555" strokeWidth=".8" /><g fill="#e6e4e0" stroke="#88857e"><rect x="1" y="1.500" width="10.500" height="11" rx=".8" /><rect x="13" y="11.500" width="10.500" height="11" rx=".8" /></g><path d="M1.500 4h9.500M2.500 6.500h3M6.500 6.500h4M2.500 8.500h3M6.500 8.500h4M2.500 10.500h3M6.500 10.500h4M13.500 14H23M14.500 16.500h3M18.500 16.500h4M14.500 18.500h3M18.500 18.500h4M14.500 20.500h3M18.500 20.500h4" stroke="#8a8780" strokeWidth=".9" /></>),
  legend: () => (<><rect x="3" y="2.500" width="4.500" height="4.500" fill="#fcc410" stroke="#e0a800" /><rect x="3" y="9" width="4.500" height="4.500" fill="#f04808" stroke="#a83008" /><rect x="3" y="15.500" width="4.500" height="4.500" fill="#10a050" stroke="#084f28" /><path d="M9.500 6h6M9.500 12h9M9.500 18.500h4" stroke="#999" strokeWidth="1.500" /></>),
  elev: () => (<><rect x="14.500" y="1.500" width="7.500" height="15" fill="#fce94f" stroke="#c4a000" /><rect x="2" y="15.500" width="7" height="7" fill="#fce94f" stroke="#c4a000" /><path d="M7 19.500h10" stroke="#222" strokeWidth=".8" /><path d="M11.500 18V3" stroke="#333" strokeWidth="1.800" /><path d="M8 6.500l3.500-5 3.500 5-3.500-1.500z" fill="#222" /></>),
  undo: () => <path d="M2 9l8-7v4.500c8-.5 12 5 11 9.500-.8 4-4 6.500-8 6.500v-3.500c4 0 5-7-3-6.500V17z" fill="#ee8040" stroke="#b05a20" strokeWidth=".8" />,
  redo: () => <path d="M22 9l-8-7v4.500C6 6 2 11.500 3 16c.8 4 4 6.500 8 6.500v-3.500c-4 0-5-7 3-6.500V17z" fill="#8fbf8f" stroke="#4f8f4f" strokeWidth=".8" />,
  plus: () => (<><path d="M8.500 2h7v6.500H22v7h-6.500V22h-7v-6.500H2v-7h6.500z" fill="#fff" stroke="#5a8c5a" strokeWidth="1.600" /><path d="M12 5v14M5 12h14" stroke="#5a8c5a" strokeWidth="3" /></>),
  minus: () => (<><rect x="1.500" y="8.500" width="21" height="7" fill="#fff" stroke="#ef4848" strokeWidth="1.600" /><path d="M4 12h16" stroke="#ef4848" strokeWidth="3" /></>),
  starFx: () => (<><path d="M10 0l3 7.500 7.500.5-5.500 5 1.500 8L10 17l-6.500 4L5 13 0 8l7-.5z" fill="#a89c60" /><path d="M16 15h7l-4 9v-6l-4 6z" fill="#778" /></>),
  az: () => (<><text x="1" y="10" fontSize="12" fontWeight="700" fill="#a44" fontFamily="Open Sans">A</text><text x="1" y="22.500" fontSize="12" fontWeight="700" fill="#446" fontFamily="Open Sans">Z</text><path d="M17.500 1l1.500 13h5l-6.500 9L11 14h5z" fill="#889" /></>),
  toggleExt: () => (<><g fill="#fff" stroke="#111" strokeWidth="1.600"><ellipse cx="9" cy="6" rx="4" ry="5" /><ellipse cx="15" cy="16" rx="4" ry="5.500" /></g><path d="M2 11l9 10M5 3l14 12M3 16l5 6M15 8l4-6M20 6h2" stroke="#111" strokeWidth="1.400" /></>),
  lock: () => (<><path d="M6.500 11V8c0-7 11-7 11 0v3" stroke="#8a8a86" strokeWidth="2.400" /><rect x="3.500" y="11" width="17" height="12" rx="1.500" fill="#5a5a5a" /></>),
  epsg: () => (<><path d="M12 1.500c6 0 7 3.500 11 8-1 3-3 5-4.500 7L16 22H8l-2.500-5.500C4 14.500 2 12.500 1 9.500c4-4.500 5-8 11-8z" fill="#777" stroke="#444" strokeWidth=".8" /><path d="M1.500 9.500h21M4 15h16M6 19h12M4.500 5.500h15M12 1.500V22M8 2.500c-2.500 6-2 13 2 19.500M16 2.500c2.500 6 2 13-2 19.500" stroke="#eee" strokeWidth=".9" /></>),
  bubble: () => (<><path d="M12 2c7 0 11.500 3.500 11.500 9 0 4-2 7-2 7l1.500 5-6-3c-8 1.500-16.500-1.500-16.500-9C.5 5.500 5 2 12 2z" fill="#5a5a5a" /><circle cx="7" cy="11.500" r="1.600" fill="#fff" /><circle cx="12" cy="11.500" r="1.600" fill="#fff" /><circle cx="17" cy="11.500" r="1.600" fill="#fff" /></>),
  search: () => (<><circle cx="10" cy="10" r="7.500" stroke="currentColor" strokeWidth="1.800" /><path d="M15.500 15.500L22 22" stroke="currentColor" strokeWidth="2.300" /></>),
};
const Icon = ({ n, s = 36, dim }) => <Svg s={s} dim={dim}>{ICONS[n]()}</Svg>;

const Caret = ({ w = 12, h = 8, c = "#4d4d4d", up, right }) =>
  right ? (
    <svg width={h} height={w} viewBox="0 0 7 12" preserveAspectRatio="none"><path d="M0 0l7 6-7 6z" fill={c} /></svg>
  ) : (
    <svg width={w} height={h} viewBox="0 0 12 7" preserveAspectRatio="none"><path d={up ? "M0 7h12L6 0z" : "M0 0h12L6 7z"} fill={c} /></svg>
  );

/* ---------- window chrome ---------- */

const Desktop = styled.div`
  position: relative;
  width: 2304px;
  height: 1536px;
  overflow: hidden;
  display: flex;
  flex-direction: column;
  background: #efefef;
`;
const TitleBar = styled.header`
  height: 34px;
  flex: none;
  display: flex;
  align-items: center;
  padding: 0 0 1px 1px;
  background: #f3f3f3;
  color: #8a8a8a;
`;
const TitleText = styled.span`
  flex: 1;
  margin-left: 9px;
  letter-spacing: 0;
`;
const WinBtns = styled.div`
  display: flex;
  gap: 54px;
  margin-right: 28px;
`;
const MenuBar = styled.nav`
  height: 31px;
  flex: none;
  display: flex;
  align-items: center;
  gap: 21.3px;
  padding-left: 16px;
  color: #999;
  border-bottom: 2px solid #d8d8d8;
  u { text-underline-offset: 3px; text-decoration-thickness: 1px; }
`;
const Toolbar = styled.div`
  height: ${(p) => p.$h}px;
  flex: none;
  display: flex;
  align-items: center;
  padding-top: ${(p) => p.$pt || 0}px;
  background: linear-gradient(#fdfdfd, #eeeeee);
  border-bottom: ${(p) => p.$b || 1}px solid #b3b3b3;
`;
const Cell = styled.div`
  width: 49.4px;
  height: 47px;
  flex: none;
  display: flex;
  align-items: center;
  justify-content: center;
  ${(p) => p.$on && css`background: #dadada; border: 1.5px solid #a6a6a6; border-radius: 4px;`}
`;
const CaretCell = styled.div`
  width: 18px;
  flex: none;
  display: flex;
  justify-content: center;
  padding-right: 2px;
`;
const Grip = styled.div`
  width: ${(p) => p.$w || 25}px;
  flex: none;
  display: flex;
  justify-content: center;
  padding-left: ${(p) => p.$pl ?? 4}px;
  &::before {
    content: "";
    width: 6px;
    height: 27px;
    background-image: radial-gradient(circle, #b4b4b4 0.9px, transparent 1.2px);
    background-size: 4px 5px;
  }
`;
const VLine = styled.div`
  width: 1px;
  margin: 0 5px;
  height: 36px;
  flex: none;
  border-left: 1px solid #c4c4c4;
`;
const Spacer = styled.div`
  width: ${(p) => p.$w}px;
  flex: none;
`;

const Strip = ({ items }) =>
  items.map((it, i) => {
    if (it === "|") return <Grip key={i} />;
    if (it === "^") return <Grip key={i} $w={19.3} $pl={3} />;
    if (it === "/") return <VLine key={i} />;
    if (it === "v") return <CaretCell key={i}><Caret w={12} h={7} /></CaretCell>;
    if (it === "w") return <CaretCell key={i}><Caret w={12} h={7} c="#9c9c9c" /></CaretCell>;
    if (typeof it === "number") return <Spacer key={i} $w={it} />;
    const dim = it[0] === "~";
    const on = it[0] === "!";
    return <Cell key={i} $on={on}><Icon n={dim || on ? it.slice(1) : it} dim={dim} /></Cell>;
  });

const TB1 = "^ newp open save layout layoutMgr styleMgr | !hand pan zin zout zfull zsel zlay ~z11 zlast ~znext mapview mesh3d bookmark bookmarks clock refresh | select v selval v desel v selloc v | ident abacus gear sigma table v ruler v maptip ~action w".split(" ");
const TB2 = "^ dsm geopkg shp spatialite chip meshnew virt | ~pencils pencil ~saveedit ~line w ~polyadd ~vertex w ~modattr ~del ~cut ~copy ~paste ~undoD ~redoD | tag pie / tagBlue tagRed / ~tag ~tag ~tag ~tag ~abcedit | gplus gzoom gbin | python leaf | help |".split(" ");
const TB3 = [..."^ ~setsq ~pMove w ~pRot ~pScale ~simp ~ring ~part ~fring ~dring ~dpart ~reshape ~offset ~splitf ~splitp ~scis".split(" "), 741, ..."~crossX ~bolt w ~trace".split(" ")];
const TB4 = "^ ~arc ~circ w ~elli w ~recta w ~penta w | greenSearch mapPaint".split(" ");

const MENUS = [["Pro", "j", "et"], ["", "É", "diter"], ["V", "u", "e"], ["", "C", "ouche"], ["", "P", "références"], ["E", "x", "tensions"], ["", "V", "ecteur"], ["", "R", "aster"], ["", "B", "ase de données"], ["", "I", "nternet"], ["", "M", "aillage"], ["", "T", "raitement"], ["", "A", "ide"]];

/* ---------- shared controls ---------- */

const Box = styled.span`
  width: 21px;
  height: 21px;
  flex: none;
  display: flex;
  align-items: center;
  justify-content: center;
  background: #fff;
  border: 2px solid #c2c2c2;
`;
const Check = ({ off }) => (
  <Box>{!off && <svg width="15" height="15" viewBox="0 0 15 15"><path d="M2.500 6.500l4 5.500L12 1.500" stroke="#000" strokeWidth="2.700" fill="none" /></svg>}</Box>
);
const Button = styled.div`
  width: ${(p) => p.$w}px;
  height: ${(p) => p.$h || 33}px;
  flex: none;
  display: flex;
  align-items: center;
  justify-content: center;
  font-size: 16px;
  letter-spacing: -0.25px;
  white-space: nowrap;
  background: linear-gradient(#fefefe, #f0f0f0);
  border: 2px solid ${(p) => (p.$primary ? "#57a8ea" : p.$soft ? "#cfcfcf" : "#b4b4b4")};
  border-radius: 4px;
`;
const Combo = styled.div`
  display: flex;
  align-items: center;
  height: ${(p) => p.$h || 36}px;
  flex: none;
  padding: 0 10px 0 ${(p) => p.$pl || 5}px;
  gap: 4px;
  font-size: 16px;
  letter-spacing: ${(p) => p.$ls ?? -0.14}px;
  background: linear-gradient(#fefefe, #ececec);
  border: 2px solid #b4b4b4;
  border-radius: 4px;
`;
const Grow = styled.span`flex: 1;`;
const Field = styled.div`
  display: flex;
  align-items: stretch;
  width: ${(p) => p.$w}px;
  height: ${(p) => p.$h || 32}px;
  flex: none;
  background: #fff;
  border: 2px solid #b4b4b4;
  border-radius: 4px;
  font-size: 16px;
  letter-spacing: -0.1px;
  overflow: hidden;
`;
const FieldText = styled.span`
  flex: 1;
  display: flex;
  align-items: center;
  gap: 7px;
  padding-left: ${(p) => p.$pl || 6}px;
  white-space: pre;
  color: ${(p) => p.$c || "#000"};
`;
const FieldSide = styled.span`
  width: ${(p) => p.$w}px;
  display: flex;
  flex-direction: column;
  align-items: center;
  justify-content: center;
  gap: 7px;
  background: #f8f8f8;
  border-left: 1.500px solid #c0c0c0;
`;
const Spin = ({ w, h, children, side = 20, soft, pl }) => (
  <Field $w={w} $h={h}>
    <FieldText $pl={pl}>{children}</FieldText>
    <FieldSide $w={side}><Caret up w={11} h={6} c={soft ? "#a4a4a4" : "#555"} /><Caret w={11} h={6} c="#555" /></FieldSide>
  </Field>
);

/* ---------- docks ---------- */

const Workspace = styled.main`
  height: 1125px;
  flex: none;
  display: flex;
`;
const LeftDock = styled.aside`
  width: 436px;
  flex: none;
  display: flex;
  flex-direction: column;
`;
const DockHead = styled.div`
  height: ${(p) => p.$h}px;
  flex: none;
  display: flex;
  align-items: center;
  gap: 4px;
  padding: 0 ${(p) => p.$pr}px 2px ${(p) => p.$pl}px;
`;
const DockBtn = styled.span`
  width: 17px;
  height: 17px;
  display: flex;
  align-items: center;
  justify-content: center;
  border: 1.500px solid #77776f;
  border-radius: 3px;
`;
const DockTitle = ({ children, h, pl = 6, pr = 2 }) => (
  <DockHead $h={h} $pl={pl} $pr={pr}>
    <Grow>{children}</Grow>
    <DockBtn><svg width="11" height="11" viewBox="0 0 11 11" fill="none" stroke="#66665f" strokeWidth="1.300"><path d="M3.500 3.500v-2.700h6.700v6.700H7.500M.8 3.700h6.500v6.500H.8z" /></svg></DockBtn>
    <DockBtn><svg width="11" height="11" viewBox="0 0 11 11" stroke="#55554f" strokeWidth="3"><path d="M1 1l9 9M10 1l-9 9" /></svg></DockBtn>
  </DockHead>
);
const DockTools = styled.div`
  height: ${(p) => p.$h}px;
  flex: none;
  display: flex;
  align-items: center;
  gap: ${(p) => p.$gap}px;
  padding: 0 0 ${(p) => p.$pb}px ${(p) => p.$pl}px;
`;
const Pressed = styled.span`
  width: 36px;
  height: 34px;
  flex: none;
  margin-right: -5px;
  display: flex;
  align-items: center;
  justify-content: center;
  background: #dcdcdc;
  border: 1.500px solid #ababab;
  border-radius: 4px;
`;
const WithCaret = styled.span`
  width: 24px;
  flex: none;
  display: flex;
  align-items: flex-end;
  svg + svg { flex: none; margin-left: -6px; margin-bottom: -2px; }
`;
const ToolCaret = styled.span`
  display: flex;
  margin: 0 -2px 0 -5px;
`;
const BrowserTree = styled.div`
  height: 479px;
  flex: none;
  display: flex;
  background: #fff;
  border-left: 1px solid #b0b0b0;
  border-right: 1.500px solid #b0b0b0;
  overflow: hidden;
`;
const Rows = styled.div`flex: 1;`;
const TreeRow = styled.div`
  height: 27px;
  width: ${(p) => (p.$hi ? "338px" : "100%")};
  display: flex;
  align-items: center;
  padding-left: ${(p) => p.$d * 24}px;
  background: ${(p) => (p.$hi ? "#efefef" : "transparent")};
  letter-spacing: ${(p) => p.$ls ?? -0.05}px;
  white-space: nowrap;
`;
const ArrowSlot = styled.span`
  width: 26px;
  display: flex;
  justify-content: center;
  flex: none;
`;
const IconSlot = styled.span`
  width: 24px;
  margin: 0 9px 0 3px;
  display: flex;
  justify-content: center;
  flex: none;
`;
const ScrollTrack = styled.div`
  width: 21px;
  flex: none;
  display: flex;
  flex-direction: column;
  background: #e4e4e4;
  border-left: 1px solid #bcbcbc;
`;
const ScrollEnd = styled.div`
  height: ${(p) => p.$h}px;
  flex: none;
  display: flex;
  align-items: center;
  justify-content: center;
  background: #fafafa;
  border: 0 solid #bdbdbd;
  border-${(p) => p.$side}-width: 1px;
`;
const ScrollGap = styled.div`height: ${(p) => p.$h}px; flex: none;`;
const ScrollThumb = styled.div`
  height: 190px;
  flex: none;
  background: #fcfcfc;
  border-top: 1.500px solid #b4b4b4;
  border-bottom: 1.500px solid #b4b4b4;
`;
const HSplit = styled.div`
  height: 11px;
  flex: none;
  display: flex;
  align-items: center;
  padding-left: 208px;
  &::before {
    content: "";
    width: 26px;
    height: 2px;
    background: repeating-linear-gradient(90deg, #b8b8b8 0 2px, transparent 2px 4.500px);
  }
`;
const VSplit = styled.div`
  width: 10px;
  flex: none;
  display: flex;
  justify-content: center;
  padding-top: 552px;
  &::before {
    content: "";
    width: 2px;
    height: 26px;
    background: repeating-linear-gradient(180deg, #b8b8b8 0 2px, transparent 2px 5px);
  }
`;
const LayerTree = styled.div`
  height: 481px;
  flex: none;
  background: #fff;
  border: 1.500px solid #b4b4b4;
`;
const LayerHead = styled.div`
  height: 28px;
  display: flex;
  align-items: center;
  padding-left: 10px;
  background: #efefef;
  b { margin-left: 9px; letter-spacing: -0.02px; text-decoration: underline; text-underline-offset: 3px; text-decoration-thickness: 1.500px; }
  > svg:first-child { margin-right: 13px; }
  > svg:nth-of-type(2) { margin-left: 9px; }
`;
const LayerClass = styled.div`
  height: 42px;
  display: flex;
  align-items: center;
  padding-left: 65px;
`;
const Swatch = styled.span`
  width: ${(p) => p.$s}px;
  height: ${(p) => p.$s}px;
  margin: 0 9px;
  flex: none;
  background: ${(p) => p.$c};
  border: 1.500px solid #232323;
`;
const Canvas = styled.section`
  width: 1175px;
  flex: none;
  margin: 4px 0 0;
  height: 1120px;
  background: #fff;
  border: 1.500px solid #b4b4b4;
  border-top: 0;
  overflow: hidden;
`;
const RightDock = styled.aside`
  flex: 1;
  display: flex;
  flex-direction: column;
  padding: 0 5px 0 14px;
`;
const StyleBody = styled.div`
  display: flex;
  gap: 5px;
  margin-top: 9px;
  height: 1039px;
`;
const Tabs = styled.div`
  width: 57px;
  flex: none;
  display: flex;
  flex-direction: column;
  background: #5d5d5d;
`;
const Tab = styled.div`
  height: 48px;
  display: flex;
  align-items: center;
  justify-content: center;
  padding-right: 9px;
  ${(p) => p.$on && css`background: #efefef; padding-right: 5px;`}
`;
const StyleMain = styled.div`
  flex: 1;
  display: flex;
  flex-direction: column;
  padding-top: 9px;
  font-size: 16px;
  letter-spacing: -0.3px;
`;
const FormRow = styled.div`
  height: ${(p) => p.$h}px;
  margin-top: ${(p) => p.$mt}px;
  flex: none;
  display: flex;
  align-items: center;
`;
const FormLabel = styled.span`
  width: ${(p) => p.$w}px;
  flex: none;
  font-size: 16px;
  letter-spacing: ${(p) => p.$ls ?? -0.3}px;
  white-space: nowrap;
`;
const Frame = styled.div`
  width: 443px;
  height: 100%;
  flex: none;
  display: flex;
  padding: 2px 5px;
  background: #fbfbfb;
  border: 2px solid #b8b8b8;
  border-radius: 4px;
`;
const FrameArrow = styled(Frame)`
  width: 18px;
  padding: 0;
  align-items: center;
  justify-content: center;
`;
const SymbolFill = styled.div`
  flex: 1;
  background: #729b6f;
  border: 1.500px solid #232323;
`;
const RampFill = styled.div`
  flex: 1;
  background: linear-gradient(90deg, #30123b, #4145ab, #4675ed, #39a2fc, #1bcfd4, #24eca6, #61fc6c, #a4fc3b, #d1e834, #f3c63a, #fe9b2d, #f36315, #d93806, #b11901, #7a0403);
`;
const ClassTable = styled.div`
  height: 503px;
  margin-top: 10px;
  flex: none;
  background: #fff;
  border: 1px solid #b8b8b8;
  border-width: 1.500px 1.500px 0 1px;
`;
const ClassHead = styled.div`
  height: 30px;
  display: grid;
  grid-template-columns: 112px 93px 1fr;
  background: linear-gradient(#fefefe, #f1f1f1);
  border-bottom: 1.500px solid #bdbdbd;
  font-size: 17px;
  letter-spacing: -0.15px;
`;
const ClassTh = styled.div`
  display: flex;
  align-items: center;
  justify-content: space-between;
  padding: 1px 6px 0 ${(p) => p.$pl}px;
  border-right: ${(p) => (p.$last ? 0 : 1.5)}px solid #cfcfcf;
  svg { margin-bottom: 8px; }
`;
const ClassRow = styled.div`
  height: 27px;
  display: grid;
  grid-template-columns: 21px 91px 93px 1fr;
  align-items: center;
  padding-left: 5px;
  font-size: 17px;
  i { color: #8a8a8a; white-space: nowrap; letter-spacing: 0; }
`;
const GroupTitle = styled.div`
  height: 36px;
  flex: none;
  display: flex;
  align-items: center;
  gap: 12px;
  padding: 3px 0 0 4px;
  font-weight: 700;
  font-size: 16.500px;
  letter-spacing: 0;
  svg { margin-top: 4px; }
`;
const Group = styled.div`
  height: 220px;
  flex: none;
  display: flex;
  flex-direction: column;
  padding: 14px 7px 0 2px;
  background: #ececec;
  border: 2px solid #d6d6d6;
`;
const Slider = styled.div`
  width: 303px;
  margin-right: 6px;
  display: flex;
  align-items: center;
  &::before { content: ""; flex: 1; height: 9px; border: 1.500px solid #b4b4b4; border-radius: 2px; background: #f4f4f4; }
  &::after { content: ""; width: 20px; height: 20px; border: 1.500px solid #adadad; border-radius: 4px; background: #fdfdfd; }
`;
const BlendCol = styled.div`
  display: flex;
  flex-direction: column;
  margin-right: 2px;
  width: ${(p) => p.$w}px;
  line-height: 22px;
`;
const CheckLabel = styled.span`
  flex: 1;
  margin-left: 7px;
  font-size: 16px;
  letter-spacing: -0.2px;
`;
const AbcTag = styled.b`
  font-size: 14.500px;
  color: #555;
  letter-spacing: -0.4px;
  margin-top: -3px;
`;
const Eps = styled.span`
  font-family: "Liberation Serif", serif;
  font-weight: 700;
  font-size: 31px;
  line-height: 20px;
  margin-top: -3px;
  color: #6a3a80;
`;

/* ---------- status bar ---------- */

const StatusBar = styled.footer`
  height: 44px;
  flex: none;
  display: flex;
  align-items: center;
  padding: 0 9px 2px 6px;
  font-size: 16px;
  letter-spacing: -0.3px;
  border-bottom: 2px solid #a9a9a9;
`;
const Lbl = styled.span`
  width: ${(p) => p.$w}px;
  flex: none;
  white-space: nowrap;
  padding-left: ${(p) => p.$pl || 0}px;
  letter-spacing: ${(p) => p.$ls ?? -0.3}px;
  display: flex;
  align-items: center;
`;

/* ---------- dialog ---------- */

const Dialog = styled.div`
  position: absolute;
  left: 782px;
  top: 142px;
  width: 741px;
  height: 1138px;
  display: flex;
  flex-direction: column;
  background: #efefef;
  border: 1.500px solid #a2a2a2;
  border-radius: 12px;
  overflow: hidden;
`;
const Shadow = styled.div`
  position: absolute;
  left: 782px;
  top: 142px;
  width: 741px;
  height: 1138px;
  border-radius: 12px;
  box-shadow: 0 32px 60px rgba(0, 0, 0, 0.34), 0 4px 36px rgba(0, 0, 0, 0.24);
`;
const DialogHead = styled.div`
  height: 43px;
  flex: none;
  display: flex;
  align-items: center;
  padding: 0 17px 2px 10px;
  gap: 9px;
  background: #f3f3f3;
`;
const DialogGrid = styled.div`
  display: grid;
  grid-template-columns: 146px 559px;
  grid-template-rows: 33px 973px;
  row-gap: 10px;
  padding: 17px 0 0 16px;
  align-items: center;
`;
const List = styled.div`
  height: 973px;
  background: #fff;
  border: 1.500px solid #bcbcbc;
  border-top: 0;
  padding: 0 0 0 5px;
`;
const ListRow = styled.div`
  height: ${(p) => p.$h || 39}px;
  display: flex;
  align-items: center;
  letter-spacing: -0.02px;
  > svg { margin: 0 9px 0 10px; }
  > em { font-style: normal; margin-left: 9px; }
`;
const DialogFoot = styled.div`
  display: flex;
  justify-content: flex-end;
  gap: 9px;
  padding: 10px 17px 0 0;
`;

const CATS = [["layerConf", "Configuration des couches"], ["symbology", "Symbologie"], ["cube", "Symbologie 3D"], ["label", "Étiquettes"], ["fields", "Champs"], ["form", "Attribute Form"], ["actions", "Actions"], ["tips", "Infobulles"], ["diag", "Diagrammes"], ["table", "Attribute Table Configuration"], ["broom", "Rendu"], ["wrench", "Propriétés personnalisées"], ["geom", "Options de géométrie"], ["relat", "Relations"], ["clock", "Propriétés temporelles"], ["legend", "Paramètres de légende"], ["elev", "Propriétés des élévations"]];

/* ---------- map ---------- */

function rng(seed) {
  let a = seed;
  return () => {
    a = (a * 1664525 + 1013904223) >>> 0;
    return a / 4294967296;
  };
}
const pts = (s) => s.trim().split(" ").map((p) => p.split(",").map(Number));
function inside([x, y], poly) {
  let r = false;
  for (let i = 0, j = poly.length - 1; i < poly.length; j = i++) {
    const [xi, yi] = poly[i];
    const [xj, yj] = poly[j];
    if (yi > y !== yj > y && x < ((xj - xi) * (y - yi)) / (yj - yi) + xi) r = !r;
  }
  return r;
}
function rough(str, amp, seed) {
  const P = pts(str);
  const r = rng(seed);
  let d = "";
  P.forEach((p, i) => {
    const q = P[(i + 1) % P.length];
    const n = Math.max(1, Math.round(Math.hypot(q[0] - p[0], q[1] - p[1]) / 8));
    for (let k = 0; k < n; k++) {
      const t = k / n;
      const x = p[0] + (q[0] - p[0]) * t + (r() - 0.5) * amp;
      const y = p[1] + (q[1] - p[1]) * t + (r() - 0.5) * amp;
      d += (d ? "L" : "M") + x.toFixed(1) + " " + y.toFixed(1);
    }
  });
  return d + "z";
}
function specks(str, count, size, seed) {
  const P = pts(str);
  const xs = P.map((p) => p[0]);
  const ys = P.map((p) => p[1]);
  const [x0, x1, y0, y1] = [Math.min(...xs), Math.max(...xs), Math.min(...ys), Math.max(...ys)];
  const r = rng(seed);
  let d = "";
  for (let i = 0; i < count; i++) {
    const c = [x0 + r() * (x1 - x0), y0 + r() * (y1 - y0)];
    if (!inside(c, P)) continue;
    const s = size * (0.35 + r() * r() * 1.8);
    const a = r() * 6.28;
    const n = 6;
    for (let k = 0; k < n; k++) {
      const t = a + (k / n) * 6.28;
      const q = s * (0.5 + r() * 0.9);
      d += (k ? "L" : "M") + (c[0] + Math.cos(t) * q * 1.3).toFixed(1) + " " + (c[1] + Math.sin(t) * q).toFixed(1);
    }
    d += "z";
  }
  return d;
}
const INK = "#232323";
const C0 = "#30123b";
const BLUE = "#3e9bfe";
const GREEN = "#46f884";
const ISLE = "280,500 285,475 318,462 302,425 303,380 345,335 395,335 410,310 430,275 485,262 497,205 555,190 562,110 600,118 660,85 695,73 820,95 850,130 878,165 850,205 858,230 828,250 835,300 820,350 780,390 735,420 730,460 680,500 635,545 565,553 560,575 545,550 480,575 445,540 405,490 375,485 330,500";
const MAIN = "405,520 435,560 445,605 495,640 550,640 590,600 680,550 730,530 745,480 770,410 820,385 865,365 885,310 870,290 850,270 860,205 910,170 930,120 1010,112 1010,985 940,945 885,975 840,1010 720,1050 720,1085 690,1085 600,1090 560,1115 480,1130 430,1185 350,1185 325,1175 280,1198 210,1188 255,1140 190,1138 140,1075 110,1050 100,1000 70,975 75,920 90,860 120,850 120,820 200,800 175,780 235,775 250,742 320,750 330,715 265,675 260,655 285,640 270,605 310,580 310,550 345,525";
const ISLE_GREEN = "760,180 840,178 850,200 825,240 830,290 790,330 790,380 740,405 690,400 640,350 680,290 720,275 740,240 765,250";
const MAIN_GREEN = "600,690 640,640 700,590 740,540 760,480 800,430 860,400 900,330 1010,300 1010,650 930,670 860,710 800,680 740,730 650,770 620,760";
const SOUTH = "600,990 690,880 820,790 1010,720 1010,960 940,935 830,1000 700,1060 560,1100 430,1150 290,1170 180,1120 160,1060 200,1080 300,1120 440,1050";
const SOUTH_CORE = "640,960 700,850 830,770 1010,720 1010,960 940,935 830,990 700,1040 600,1060 500,1090 380,1130 440,1060 600,1000";
const EAST = "860,280 870,210 920,160 1010,130 1010,330 890,340";
const COAST = "590,640 700,560 750,440 830,390 880,340 900,400 800,450 740,560 610,680";
const RURAL = "350,340 550,220 720,120 840,130 740,230 640,330 660,420 700,450 600,530 480,550 400,450 330,440";
const WEST = "300,580 420,560 500,660 560,780 560,880 380,1010 230,1010 110,980 110,880 260,800 360,740";
const STRIP = "370,1030 560,890 580,940 520,1020 380,1070";
const TAIL = "220,1130 330,1130 300,1190 215,1190";
const RIGHT = "66,97 98,118 160,95 247,68 246,80 230,115 215,165 165,230 160,300 152,420 165,480 180,540 180,600 172,680 150,750 100,820 66,885 40,880 40,97";
const RIGHT_GREEN = "62,300 95,240 110,150 150,105 218,90 210,150 158,215 152,300 142,420 155,490 170,550 170,600 160,670 140,740 95,805 62,850";
const RIGHT_LOW = "62,640 170,640 140,740 62,870";
const PATCHES = ["630,780 780,710 808,728 760,770 680,820 640,828", "545,785 600,775 618,860 590,872 550,830", "375,880 415,848 425,882 390,908", "222,1020 285,1010 330,1030 260,1032", "243,1035 252,1037 250,1120 225,1135", "210,1188 250,1142 325,1130 300,1180 260,1195", "870,760 940,730 970,770 940,800 880,800", "135,990 150,988 155,1010 145,1030 132,1015", "518,650 560,650 555,685 535,692", "635,825 675,850 665,870 640,850", "905,890 940,860 950,890 920,910"];

const MapArt = () => (
  <svg width="1175" height="1120" viewBox="446 301 1175 1120">
    <g transform="translate(450 900) scale(.33333)">
      <path d={rough(ISLE, 9, 3)} fill={C0} stroke={INK} strokeWidth="6" />
      <path d={rough(MAIN, 9, 7)} fill={C0} stroke={INK} strokeWidth="6" />
      <path d="M285 430l14-4 3 10-10 4zM62 1020l16-18 14 14-8 12zM66 988l8-4 6 8-10 4zM114 1084l14-10v10zM172 1164l8-6v10zM180 1152l6 4M470 580l20-8 10 6z" fill={INK} stroke={INK} strokeWidth="3" />
      <path d={rough(ISLE_GREEN, 10, 11)} fill={GREEN} />
      <path d={rough(MAIN_GREEN, 10, 13)} fill={GREEN} />
      <path d={specks(RURAL, 330, 4, 30)} fill={INK} />
      <path d={specks(WEST, 420, 4, 31)} fill={INK} />
      <path d={specks(RURAL, 36, 4, 32)} fill={BLUE} />
      <path d={specks(WEST, 40, 5, 33)} fill={BLUE} />
      <path d="M310 800l15-6 20 8 5 14-18-2-10 10zM575 730l10 8 12-4-2 20-12 2zM600 368l16 16-4 4zM480 405l16 4-6 14zM738 100l12-4-2 18-8-2zM305 985l14-10 10 6-8 18z" fill={BLUE} />
      <path d={specks(SOUTH, 3600, 5.5, 34)} fill={INK} />
      <path d={specks(SOUTH_CORE, 1500, 4.5, 35)} fill={BLUE} />
      <path d={specks("150,1040 200,1080 220,1130 190,1135", 60, 5, 57)} fill={BLUE} />
      <path d={specks(SOUTH, 300, 4, 58)} fill={BLUE} />
      {PATCHES.map((p, i) => <path key={i} d={rough(p, 6, 20 + i)} fill={GREEN} />)}
      <path d={specks("800,810 860,740 1010,700 1010,930 900,950 820,900", 620, 5, 37)} fill={GREEN} />
      <path d={specks(SOUTH_CORE, 120, 4, 59)} fill={GREEN} />
      <path d={specks(SOUTH, 1800, 4, 36)} fill={INK} />
      <path d={specks(STRIP, 330, 5, 38)} fill={GREEN} />
      <path d={specks(STRIP, 320, 4, 48)} fill={INK} />
      <path d={specks(TAIL, 160, 4, 39)} fill={INK} />
      <path d={specks(TAIL, 40, 4, 49)} fill={BLUE} />
      <path d={specks("500,250 620,160 600,200 530,260", 60, 4, 40)} fill={GREEN} />
      <path d={specks(EAST, 700, 6, 42)} fill={GREEN} />
      <path d={specks(EAST, 330, 5, 43)} fill={BLUE} />
      <path d={specks(EAST, 900, 5, 44)} fill={INK} />
      <path d={specks(COAST, 1300, 6, 45)} fill={INK} />
      <path d={specks(COAST, 320, 3.5, 46)} fill={BLUE} />
      <path d={specks(COAST, 340, 4, 47)} fill={GREEN} />
      <path d={specks(ISLE_GREEN, 260, 5, 50)} fill={INK} />
      <path d={specks("660,430 740,410 720,470 670,480", 60, 5, 51)} fill={GREEN} />
      <path d={specks(MAIN_GREEN, 640, 5.5, 52)} fill={INK} />
      <path d={specks("545,785 600,775 618,860 590,872 550,830", 44, 6, 53)} fill={INK} />
      <path d={specks("860,560 1010,420 1010,640 880,700 780,640", 70, 7, 55)} fill={C0} />
      <path d={specks("840,540 1010,540 1010,680 870,710", 50, 4, 56)} fill={BLUE} />
      <g stroke={INK} strokeWidth="8" fill="none">
        <path d="M600 690l15 60 15 110M632 775L780 690l90 20M860 525l50 70 45 70M910 600l95-55M715 610l30 45M675 840l110-80 140-40M470 795l50 55" />
      </g>
      <path d="M920 595l85-52M440 1050l-130 65" stroke={BLUE} strokeWidth="4" fill="none" />
      <path d="M365 1025l80-55 120-85" stroke={GREEN} strokeWidth="4" fill="none" strokeDasharray="20 5 8 6" />
      <path d="M255 1035l95-5 20 10-30 45-60 25-30-10z" fill={C0} />
      <path d="M570 880l75-10 30 60-30 40-90-5z" fill={C0} />
      <path d="M908 378l8 0 12 38-10 2zM745 580l6 20-5 6zM725 560l8 4-4 8z" fill="#e1dd37" />
      <path d="M635 875l14-6 4 6-12 6zM458 490l10 8-6 4zM626 222l10 0-2 4z" fill="#fff" />
    </g>
    <g transform="translate(1500 330) scale(.33333)">
      <path d="M88 85l17-10 20-5 14-10 6 12-14 14-20 14-20 3z" fill={C0} stroke={INK} strokeWidth="5" />
      <path d={rough(RIGHT, 6, 60)} fill={INK} stroke={INK} strokeWidth="4" />
      <path d={rough(RIGHT_GREEN, 8, 61)} fill={GREEN} />
      <path d="M60 95l38 25 22 20-8 40-6 60-46 0zM85 262l70-5 0 38-66 4z" fill={C0} stroke={INK} strokeWidth="5" />
      <path d={specks(RIGHT_GREEN, 560, 5.5, 62)} fill={INK} />
      <path d={specks(RIGHT_GREEN, 60, 4, 63)} fill={BLUE} />
      <path d={specks(RIGHT_LOW, 110, 4.5, 64)} fill={INK} />
      <path d={specks(RIGHT_LOW, 24, 4, 65)} fill="#e1dd37" />
      <path d="M92 468l38-2 2 16-34 2z" fill={BLUE} stroke={INK} strokeWidth="3" />
      <path d="M108 204l18 4-14 14zM62 860l12 6-8 16z" fill="#f05b12" />
      <path d="M192 572l8 4v12l-6-2zM192 595h5v10h-5z" fill={INK} />
    </g>
  </svg>
);

/* ---------- taskbar ---------- */

const Taskbar = styled.div`
  height: 70px;
  flex: none;
  display: flex;
  align-items: flex-start;
  background: linear-gradient(90deg, #dddddd, #d9d9d9 40%, #dedfde 75%, #dadada);
`;
const Weather = styled.div`
  width: 326px;
  height: 66px;
  display: flex;
  padding: 8px 0 0 28px;
`;
const Temp = styled.span`
  width: 36px;
  height: 24px;
  margin-left: -24px;
  border-radius: 12px;
  background: #f4f4f4;
  font-size: 14.500px;
  line-height: 22px;
  text-align: center;
  color: #222;
`;
const TaskCell = styled.div`
  width: 66px;
  height: 70px;
  flex: none;
  display: flex;
  flex-direction: column;
  align-items: center;
`;
const TaskTile = styled.div`
  width: 54px;
  height: 57px;
  margin-top: 6px;
  display: flex;
  flex-direction: column;
  align-items: center;
  padding-top: 11px;
  border-radius: 7px;
  ${(p) => p.$on && css`background: #ededed; border: 1px solid #cfcfcf; padding-top: 9px;`}
  &::after {
    content: "";
    flex: none;
    width: ${(p) => (p.$on ? 24 : 8)}px;
    height: 5px;
    margin-top: 5px;
    border-radius: 3px;
    background: ${(p) => (p.$on ? "#0a78d4" : p.$run ? "#7d7d7d" : "transparent")};
  }
`;
const SearchPill = styled.div`
  width: 326px;
  height: 47px;
  margin: 10px 5px 0 7px;
  flex: none;
  display: flex;
  align-items: center;
  padding: 0 10px 0 15px;
  gap: 15px;
  border-radius: 24px;
  border: 1.500px solid #c4c4c4;
  background: #f4f4f4;
  color: #222;
  font-size: 18.500px;
  span { flex: 1; color: #555; letter-spacing: 0; }
`;
const Tray = styled.div`
  flex: 1;
  display: flex;
  justify-content: flex-end;
  align-items: center;
  height: 67px;
  padding-right: 29px;
  font-size: 17px;
  letter-spacing: -0.25px;
  line-height: 23px;
  color: #1c1c1c;
`;
const Lines = styled.div`
  text-align: ${(p) => p.$a};
  width: ${(p) => p.$w}px;
  flex: none;
`;
const TrayIcon = styled.span`
  margin-right: ${(p) => p.$mr}px;
  display: flex;
`;
const GithubTile = styled.span`
  width: 35px;
  height: 35px;
  flex: none;
  display: flex;
  align-items: center;
  justify-content: center;
  background: #1c1c1e;
`;

const OutlookArt = () => (<><path d="M7 3h15c1 0 2 1 2 2v15c0 2-1 3-3 3H8z" fill="#28a0e8" /><path d="M9 3h14l-7 9-8-3z" fill="#0c5fb0" /><path d="M8 23l16-11v9c0 1-1 2-2 2z" fill="#50d0f8" /><rect x="0" y="7" width="13" height="13" rx="1.500" fill="#1066b8" /><circle cx="6.500" cy="13.500" r="3.300" stroke="#fff" strokeWidth="1.900" /></>);
const TASKS = [
  [() => (<><rect x="0" y="7" width="17" height="16.500" fill="#333" /><rect x="6" y="0" width="18" height="17" fill="#f8f8f8" fillOpacity=".8" /></>)],
  [() => (<><path d="M7 5V1.500h10V5" stroke="#1898e0" strokeWidth="1.500" /><path d="M0 4.500h24V20c0 3-1 4-4 4H4c-3 0-4-1-4-4z" fill="#1464b0" /><path d="M7 8h4.600v4.600H7z" fill="#f25022" /><path d="M12.500 8h4.600v4.600h-4.600z" fill="#7fba00" /><path d="M7 13.500h4.600V18H7z" fill="#00a4ef" /><path d="M12.500 13.500h4.600V18h-4.600z" fill="#ffb900" /></>)],
  [() => (<><path d="M0 1.500h8l3 3h12V9H0z" fill="#e0a010" /><path d="M0 5h24v17c0 1-.5 1.500-1.500 1.500h-21C.5 23.500 0 23 0 22z" fill="#fcc838" /><path d="M4 23.500V18c0-2 1-3 3-3h10c2 0 3 1 3 3v5.500z" fill="#1478d0" /><path d="M8 19h8" stroke="#0c4f90" strokeWidth="1.500" /></>), 1],
  [() => (<><path d="M12 .3c7.300 0 11.700 5 11.700 10.200 0 4-3 6-6.500 6-3 0-3.500-1.500-2.500-2.500C16 11 14 8 10 8 5 8 1 10 .5 13 0 6 5 .3 12 .3z" fill="#28b4c8" /><path d="M.5 13C1 9 5 7.500 9 8.500c-3 3-2.500 8 1 10.500 3.500 2 8 1.500 12 0-3 4-7 4.700-9.500 4.700C5 23.500.5 19 .5 13z" fill="#1468c0" /><path d="M12 .3c8 .2 11.700 5.500 11.700 10.200 0 4-3 6-6 6 4-4 3-12-5.700-16.200z" fill="#54d06c" /></>), 1],
  [() => (<><circle cx="13" cy="4.500" r="4" fill="#7b83eb" /><circle cx="20.500" cy="5.500" r="2.700" fill="#5059c9" /><path d="M16 9.500h8v7c0 4-6 4-8 1z" fill="#5059c9" /><path d="M7 9.500h12v7c0 8-12 8-12 0z" fill="#7b83eb" /><rect x="0" y="6.500" width="12.500" height="12.500" rx="1.200" fill="#4b53bc" /><path d="M3.500 10h5.500M6.200 10v6" stroke="#fff" strokeWidth="1.600" /></>)],
  [() => (<><rect x=".5" y="0" width="23" height="22.500" rx="4" fill="#b30b00" /><path d="M4 17.500c3-1.500 8-9 7.700-13 2.300 0 .3 4 1.300 7s5 3 7 2.500c-1-3-10-.5-16 3.500z" stroke="#fff" strokeWidth="1.400" /></>)],
  [OutlookArt],
  [() => (<><path d="M17 0l6.500 3v18L17 24 1 9.500l3-2.500L17 17z" fill="#1f8ad8" /><path d="M17 0v7L4 17 1 14.500z" fill="#0a6cbc" /><path d="M17 0l6.500 3v18L17 24z" fill="#30a8f0" /></>)],
  [() => (<><rect x="5" y="1" width="19" height="22" rx="1.500" fill="#1478d0" /><path d="M9 4h8v7H9z" fill="#28a0e8" /><path d="M17 4h7v7h-7z" fill="#50c8f8" /><path d="M5 12l10 6 9-6v10H5z" fill="#1490df" /><rect x="0" y="7" width="12" height="12.500" rx="1.200" fill="#0c5fb0" /><circle cx="6" cy="13.300" r="3" stroke="#fff" strokeWidth="1.800" /></>)],
  [() => <Elephant fill="#336791" line="#eef3f8" />],
  ["gh"],
  [() => (<><path d="M8 1.500h8l8 14h-8z" fill="#fbbc04" /><path d="M8 1.500l4 7L4 22.500l-4-7z" fill="#1ea362" /><path d="M7.800 15.500H24l-4 7H4z" fill="#4688f4" /><path d="M16.300 15.500H24l-4 7z" fill="#ea4335" /></>)],
  [() => (<><circle cx="12" cy="12" r="9" stroke="#727b86" strokeWidth="6" strokeDasharray="5.400 4" /><circle cx="12" cy="12" r="8.300" fill="#8c96a2" stroke="#727b86" strokeWidth="1.500" /><circle cx="12" cy="12" r="4.500" fill="#1464b8" stroke="#f0f0f0" strokeWidth="1.500" /></>), 1],
  [() => (<><rect x="1" y="1" width="22" height="22" rx="2.500" fill="#16262a" /><circle cx="12" cy="12" r="9" stroke="#10b8c8" strokeWidth="1.200" /><circle cx="12" cy="12" r="6" fill="#10d8e8" stroke="#0a4f58" /></>), 1],
  ["q", 2],
  [() => (<><rect x="0" y="2" width="24" height="19.500" rx="1.500" fill="#2f2f2f" /><path d="M0 5V3.500C0 2.500.5 2 1.500 2h21c1 0 1.500.5 1.500 1.500V5z" fill="#bdbdbd" /><path d="M4 8.500l5 4-5 4M11 17.500h8.500" stroke="#fff" strokeWidth="1.700" /></>), 1],
];
const TaskArt = ({ art }) => {
  if (art === "gh") return <GithubTile><FaGithub size={29} color="#fff" /></GithubTile>;
  if (art === "q") return <Icon n="qgis" s={36} />;
  return <Svg s={35}>{art()}</Svg>;
};

const CLASSES = [["#30123b", "0"], ["#3e9bfe", "1"], ["#46f884", "2"], ["#e1dd37", "3"], ["#f05b12", "4"], ["#7a0403", ""]];
const SMALL_ICONS = { db: 22, raster: 20, conn: 21 };
const TREE = [
  { d: 0, ic: "feather", t: "SpatiaLite" },
  { d: 0, a: "v", ic: "pg", t: "PostgreSQL" },
  { d: 1, a: "v", ic: "conn", t: "Labo" },
  ...["BELM24339701", "FAYT16299706", "geo7630", "GONT13318905", "HADI08319407", "HAMK15319703", "MASL68310301"].map((t) => ({ d: 2, a: ">", ic: "db", t })),
  { d: 2, a: "v", ic: "db", t: "MBAI89260004" },
  { d: 3, a: ">", ic: "poly", t: "densite_arbres_quartiers", ls: -0.23 },
  { d: 3, ic: "raster", t: "hm-2002-can-4000-0257", ls: 0.24 },
  { d: 3, a: ">", ic: "poly", t: "ilots_chaleur_polygones", hi: true, ls: 0.02 },
  ...["MEIB19269006", "NGUR02339009", "public", "RANL13299903"].map((t) => ({ d: 2, a: ">", ic: "db", t })),
];

export default function App() {
  return (
    <Desktop>
      <Global />
      <TitleBar>
        <Icon n="qgis" s={25} />
        <TitleText>*labo4 — QGIS</TitleText>
        <WinBtns>
          <svg width="16" height="16" viewBox="0 0 16 16"><path d="M0 8.500h16" stroke="#888" /></svg>
          <svg width="16" height="16" viewBox="0 0 16 16" fill="none" stroke="#888" strokeWidth="1.300"><rect x="1" y="4" width="11" height="11" rx="2" /><path d="M4 1h8c2 0 3 1 3 3v8" /></svg>
          <svg width="16" height="16" viewBox="0 0 16 16" stroke="#888" strokeWidth="1.300"><path d="M1 1l14 14M15 1L1 15" /></svg>
        </WinBtns>
      </TitleBar>
      <MenuBar>{MENUS.map((m) => <span key={m.join("")}>{m[0]}<u>{m[1]}</u>{m[2]}</span>)}</MenuBar>
      <Toolbar $h={58}><Strip items={TB1} /></Toolbar>
      <Toolbar $h={59} $b={2} $pt={1}><Strip items={TB2} /></Toolbar>
      <Toolbar $h={58} $pt={1}><Strip items={TB3} /></Toolbar>
      <Toolbar $h={57} $pt={4}><Strip items={TB4} /></Toolbar>

      <Workspace>
        <LeftDock>
          <DockTitle h={36}>Explorateur</DockTitle>
          <DockTools $h={43} $gap={13.5} $pb={7} $pl={12}>
            {["winAdd", "refresh", "filter", "collapse", "info"].map((n) => <Icon key={n} n={n} s={24} />)}
          </DockTools>
          <BrowserTree>
            <Rows>
              {TREE.map(({ d, a, ic, t, hi, ls }) => (
                <TreeRow key={t} $d={d} $hi={hi} $ls={ls}>
                  <ArrowSlot>{a === "v" ? <Caret w={12} h={7} /> : a === ">" ? <Caret right w={12} h={7} /> : null}</ArrowSlot>
                  <IconSlot><Icon n={ic} s={SMALL_ICONS[ic] || 24} /></IconSlot>
                  {t}
                </TreeRow>
              ))}
            </Rows>
            <ScrollTrack>
              <ScrollEnd $h={20} $side="bottom"><Caret up w={12} h={6} /></ScrollEnd>
              <ScrollGap $h={79} />
              <ScrollThumb />
              <ScrollGap $h={169} />
              <ScrollEnd $h={21} $side="top"><Caret w={12} h={6} /></ScrollEnd>
            </ScrollTrack>
          </BrowserTree>
          <HSplit />
          <DockTitle h={30}>Couches</DockTitle>
          <DockTools $h={44} $gap={13.5} $pb={3} $pl={6}>
            <Pressed><Icon n="symbology" s={24} /></Pressed>
            <Icon n="groupAdd" s={24} />
            <WithCaret><Icon n="eye" s={24} /><Caret w={9} h={5} /></WithCaret>
            <WithCaret><Icon n="filter" s={24} /><Caret w={9} h={5} /></WithCaret>
            <Icon n="eps" s={24} />
            <ToolCaret><Caret w={11} h={6} /></ToolCaret>
            <Icon n="expand" s={24} />
            <Icon n="collapse" s={24} />
            <Icon n="winDel" s={24} />
          </DockTools>
          <LayerTree>
            <LayerHead><Caret w={12} h={7} /><Check /><Icon n="poly" s={24} /><b>ilots_chaleur_polygones</b></LayerHead>
            {CLASSES.map(([c, t]) => <LayerClass key={c}><Check /><Swatch $s={39} $c={c} />{t}</LayerClass>)}
          </LayerTree>
        </LeftDock>
        <VSplit />
        <Canvas><MapArt /></Canvas>
        <RightDock>
          <DockTitle h={36} pl={2} pr={0}>Style de Couche</DockTitle>
          <Combo $pl={7}><Icon n="poly" s={24} /><Grow>ilots_chaleur_polygones</Grow><Caret w={12} h={8} /></Combo>
          <StyleBody>
            <Tabs>
              {["symbology", "label", "mask", "cube", "mesh", "brushes", "history"].map((n, i) => (
                <Tab key={n} $on={i === 0}><Icon n={n} s={33} /></Tab>
              ))}
            </Tabs>
            <StyleMain>
              <Combo $pl={8} $ls={-0.4}><Icon n="categ" s={24} /><Grow>Catégorisé</Grow><Caret w={12} h={8} /></Combo>
              <FormRow $h={35} $mt={9}>
                <FormLabel $w={141}>Valeur</FormLabel>
                <Field $w={416} $h={35}>
                  <FieldText $pl={4}><AbcTag>abc</AbcTag>classification</FieldText>
                  <FieldSide $w={31}><Caret w={12} h={8} /></FieldSide>
                </Field>
                <Spacer $w={10} />
                <Button $w={35} $h={35}><Eps>ε</Eps></Button>
              </FormRow>
              <FormRow $h={39} $mt={10}><FormLabel $w={141}>Symbole</FormLabel><Frame><SymbolFill /></Frame><FrameArrow><Caret w={11} h={7} /></FrameArrow></FormRow>
              <FormRow $h={31} $mt={11}><FormLabel $w={141}>Palette de couleur</FormLabel><Frame><RampFill /></Frame><FrameArrow><Caret w={11} h={7} /></FrameArrow></FormRow>
              <ClassTable>
                <ClassHead><ClassTh $pl={3}>Symbole<Caret w={12} h={7} /></ClassTh><ClassTh $pl={4}>Valeur</ClassTh><ClassTh $pl={4} $last>Légende</ClassTh></ClassHead>
                {CLASSES.map(([c, t]) => (
                  <ClassRow key={c}><Check /><Swatch $s={25} $c={c} />{t ? <span>{t}</span> : <i>toutes le...</i>}{t && <span>{t}</span>}</ClassRow>
                ))}
              </ClassTable>
              <FormRow $h={36} $mt={10}>
                <Button $w={120}>Classer</Button><Spacer $w={9} />
                <Button $w={42} $h={36}><Icon n="plus" s={24} /></Button><Spacer $w={9} />
                <Button $w={42} $h={36}><Icon n="minus" s={24} /></Button><Spacer $w={9} />
                <Button $w={126}>Supprimer Tout</Button><Grow />
                <Button $w={120}><Spacer $w={17} /><span>Avancé</span><Spacer $w={26} /><Caret w={8} h={5} /></Button>
              </FormRow>
              <GroupTitle><Caret w={16} h={11} c="#333" />Rendu de couche</GroupTitle>
              <Group>
                <FormRow $h={30} $mt={0}><FormLabel $w={131}>Opacité</FormLabel><Slider /><Spin w={149} h={30} soft>100,0%</Spin></FormRow>
                <FormRow $h={58} $mt={11}>
                  <FormLabel $w={131}>Mode de fusion</FormLabel>
                  <BlendCol $w={229}>Couche<Combo $ls={-0.4}><Grow>Normal</Grow><Caret w={12} h={8} /></Combo></BlendCol>
                  <BlendCol $w={227}>Entité<Combo $ls={-0.4}><Grow>Normal</Grow><Caret w={12} h={8} /></Combo></BlendCol>
                </FormRow>
                <FormRow $h={34} $mt={10}><Check off /><CheckLabel>Effets</CheckLabel><Button $w={35} $h={34} $soft><Icon n="starFx" s={22} dim /></Button></FormRow>
                <FormRow $h={34} $mt={9}><Check off /><CheckLabel>Contrôle de l'ordre de rendu des entités</CheckLabel><Button $w={35} $h={34} $soft><Icon n="az" s={21} dim /></Button></FormRow>
              </Group>
              <FormRow $h={34} $mt={10}>
                <Button $w={36} $h={34}><Icon n="undo" s={20} /></Button><Spacer $w={9} />
                <Button $w={36} $h={34}><Icon n="redo" s={20} /></Button><Grow />
                <Check /><Spacer $w={8} /><FormLabel $w={168}>Mise à jour en direct</FormLabel>
                <Button $w={120}>Appliquer</Button>
              </FormRow>
            </StyleMain>
          </StyleBody>
        </RightDock>
      </Workspace>

      <StatusBar>
        <Field $w={361}><FieldText $pl={12} $c="#777"><Icon n="search" s={20} />Taper pour trouver (Ctrl+K)</FieldText></Field>
        <Spacer $w={734} />
        <Lbl $w={93}>Coordonnée</Lbl>
        <Field $w={151}><FieldText $pl={9}>{"267026  5044318"}</FieldText></Field>
        <Lbl $w={50} $pl={6}><Icon n="toggleExt" s={25} /></Lbl>
        <Lbl $w={56}>Échelle</Lbl>
        <Field $w={121}><FieldText $pl={4}>1:199643</FieldText><FieldSide $w={30}><Caret w={11} h={8} /></FieldSide></Field>
        <Lbl $w={50} $pl={15}><Icon n="lock" s={24} /></Lbl>
        <Lbl $w={49}>Loupe</Lbl>
        <Spin w={125}>100%</Spin>
        <Lbl $w={91} $pl={15}>Rotation</Lbl>
        <Spin w={125} pl={4}>0,0 °</Spin>
        <Spacer $w={8} />
        <Check />
        <Lbl $w={76} $pl={7}>Rendu</Lbl>
        <Icon n="epsg" s={24} />
        <Lbl $w={127} $pl={4} $ls={0.05}>EPSG:32188</Lbl>
        <Icon n="bubble" s={25} />
      </StatusBar>

      <Taskbar>
        <Weather>
          <svg width="38" height="38" viewBox="0 0 38 38"><defs><linearGradient id="cl" x1="0" y1="0" x2="0" y2="1"><stop offset="0" stopColor="#dbe8fb" /><stop offset="1" stopColor="#8db4ea" /></linearGradient></defs><path d="M9 35c-9 0-9-11-1-12 1-6 6-10 12-9 7 0 10 5 9 10 7 1 7 11 0 11z" fill="url(#cl)" /></svg>
          <Temp>-13°</Temp>
        </Weather>
        <Spacer $w={14} />
        <TaskCell><TaskTile><Svg s={35}><path d="M0 0h11.500v11.500H0zM12.500 0H24v11.500H12.500z" fill="#28b0f0" /><path d="M0 12.500h11.500V24H0zM12.500 12.500H24V24H12.500z" fill="#0a80d8" /></Svg></TaskTile></TaskCell>
        <SearchPill>
          <Icon n="search" s={24} />
          <span>Recherche</span>
          <Svg s={62} vb="0 0 48 24">
            <path d="M2 10l16-3 3 13-15 3z" fill="#6a4c9c" /><path d="M1 8L16 1l1 3.500L2 11z" fill="#3c2c5c" /><path d="M5 6l2 3M9 4.500l2 3M13 2.500l2 3" stroke="#fff" strokeWidth="1.300" />
            <path d="M29 4.500l18 2-2 15.500-18-3z" fill="#fff" stroke="#9474c8" strokeWidth="1.500" /><path d="M31 8l12 1.300M38 13l5 .6M37.500 16.500l5 .7" stroke="#9474c8" strokeWidth="1.200" /><path d="M33 10.500l1 2.500 2.500.3-2 1.700.5 2.500-2-1.300-2.500 1 .8-2.500-1.500-2 2.300-.2z" fill="#f8b010" />
          </Svg>
        </SearchPill>
        {TASKS.map(([art, run], i) => (
          <TaskCell key={i}><TaskTile $run={run === 1} $on={run === 2}><TaskArt art={art} /></TaskTile></TaskCell>
        ))}
        <Tray>
          <TrayIcon $mr={26}><svg width="17" height="10" viewBox="0 0 17 10"><path d="M1 9l7.500-7.500L16 9" stroke="#222" strokeWidth="1.700" fill="none" /></svg></TrayIcon>
          <TrayIcon $mr={20}><Svg s={27}><path d="M6 17C0 17 0 9 6 9c1-6 11-6 12 0 5 1 5 8 0 8z" fill="#aaa" stroke="#444" strokeWidth="1.300" /><circle cx="18" cy="17" r="6" fill="#d81c28" /><path d="M15.700 14.700l4.600 4.600M20.300 14.700l-4.600 4.600" stroke="#fff" strokeWidth="1.400" /></Svg></TrayIcon>
          <Lines $a="center" $w={48}>FRA<br />CAFR</Lines>
          <Spacer $w={18} />
          <TrayIcon $mr={11}><Svg s={26}><path d="M1 9.500C7 3 17 3 23 9.500M4.500 13c4-4.500 11-4.500 15 0M8 16.500c2-2.500 6-2.500 8 0" stroke="#222" strokeWidth="1.800" /><circle cx="12" cy="19.500" r="1.800" fill="#222" /></Svg></TrayIcon>
          <TrayIcon $mr={11}><Svg s={25}><path d="M1 9v6h4l6 5V4L5 9zM15.500 9l6 6M21.500 9l-6 6" stroke="#222" strokeWidth="1.500" /></Svg></TrayIcon>
          <TrayIcon $mr={20}><Svg s={26}><rect x="1" y="5.500" width="19" height="13" rx="3" stroke="#222" strokeWidth="1.700" /><rect x="4" y="8.500" width="4.500" height="7" fill="#222" /><path d="M22.500 9.500v5" stroke="#222" strokeWidth="2" /></Svg></TrayIcon>
          <Lines $a="right" $w={98}>21:27<br />2025-01-28</Lines>
        </Tray>
      </Taskbar>

      <Shadow />
      <Dialog>
        <DialogHead>
          <Icon n="qgis" s={25} />
          <Grow>Enregistrer le style de la couche</Grow>
          <svg width="17" height="17" viewBox="0 0 17 17" stroke="#111" strokeWidth="1.500"><path d="M1 1l15 15M16 1L1 16" /></svg>
        </DialogHead>
        <DialogGrid>
          <FormLabel $w={146} $ls={-0.1}>Enregistrer le style</FormLabel>
          <Combo $h={33}><Grow>Comme défaut dans la base de données locale</Grow><Caret w={12} h={7} /></Combo>
          <FormLabel $w={146} $ls={-0.2}>Catégories</FormLabel>
          <List>
            {CATS.map(([n, t]) => <ListRow key={t}><Check /><Icon n={n} s={35} />{t}</ListRow>)}
            <ListRow $h={24}><Check /><em>Notes</em></ListRow>
          </List>
        </DialogGrid>
        <DialogFoot><Button $w={120} $primary>OK</Button><Button $w={120}>Annuler</Button><Button $w={120}>Aide</Button></DialogFoot>
      </Dialog>
    </Desktop>
  );
}
